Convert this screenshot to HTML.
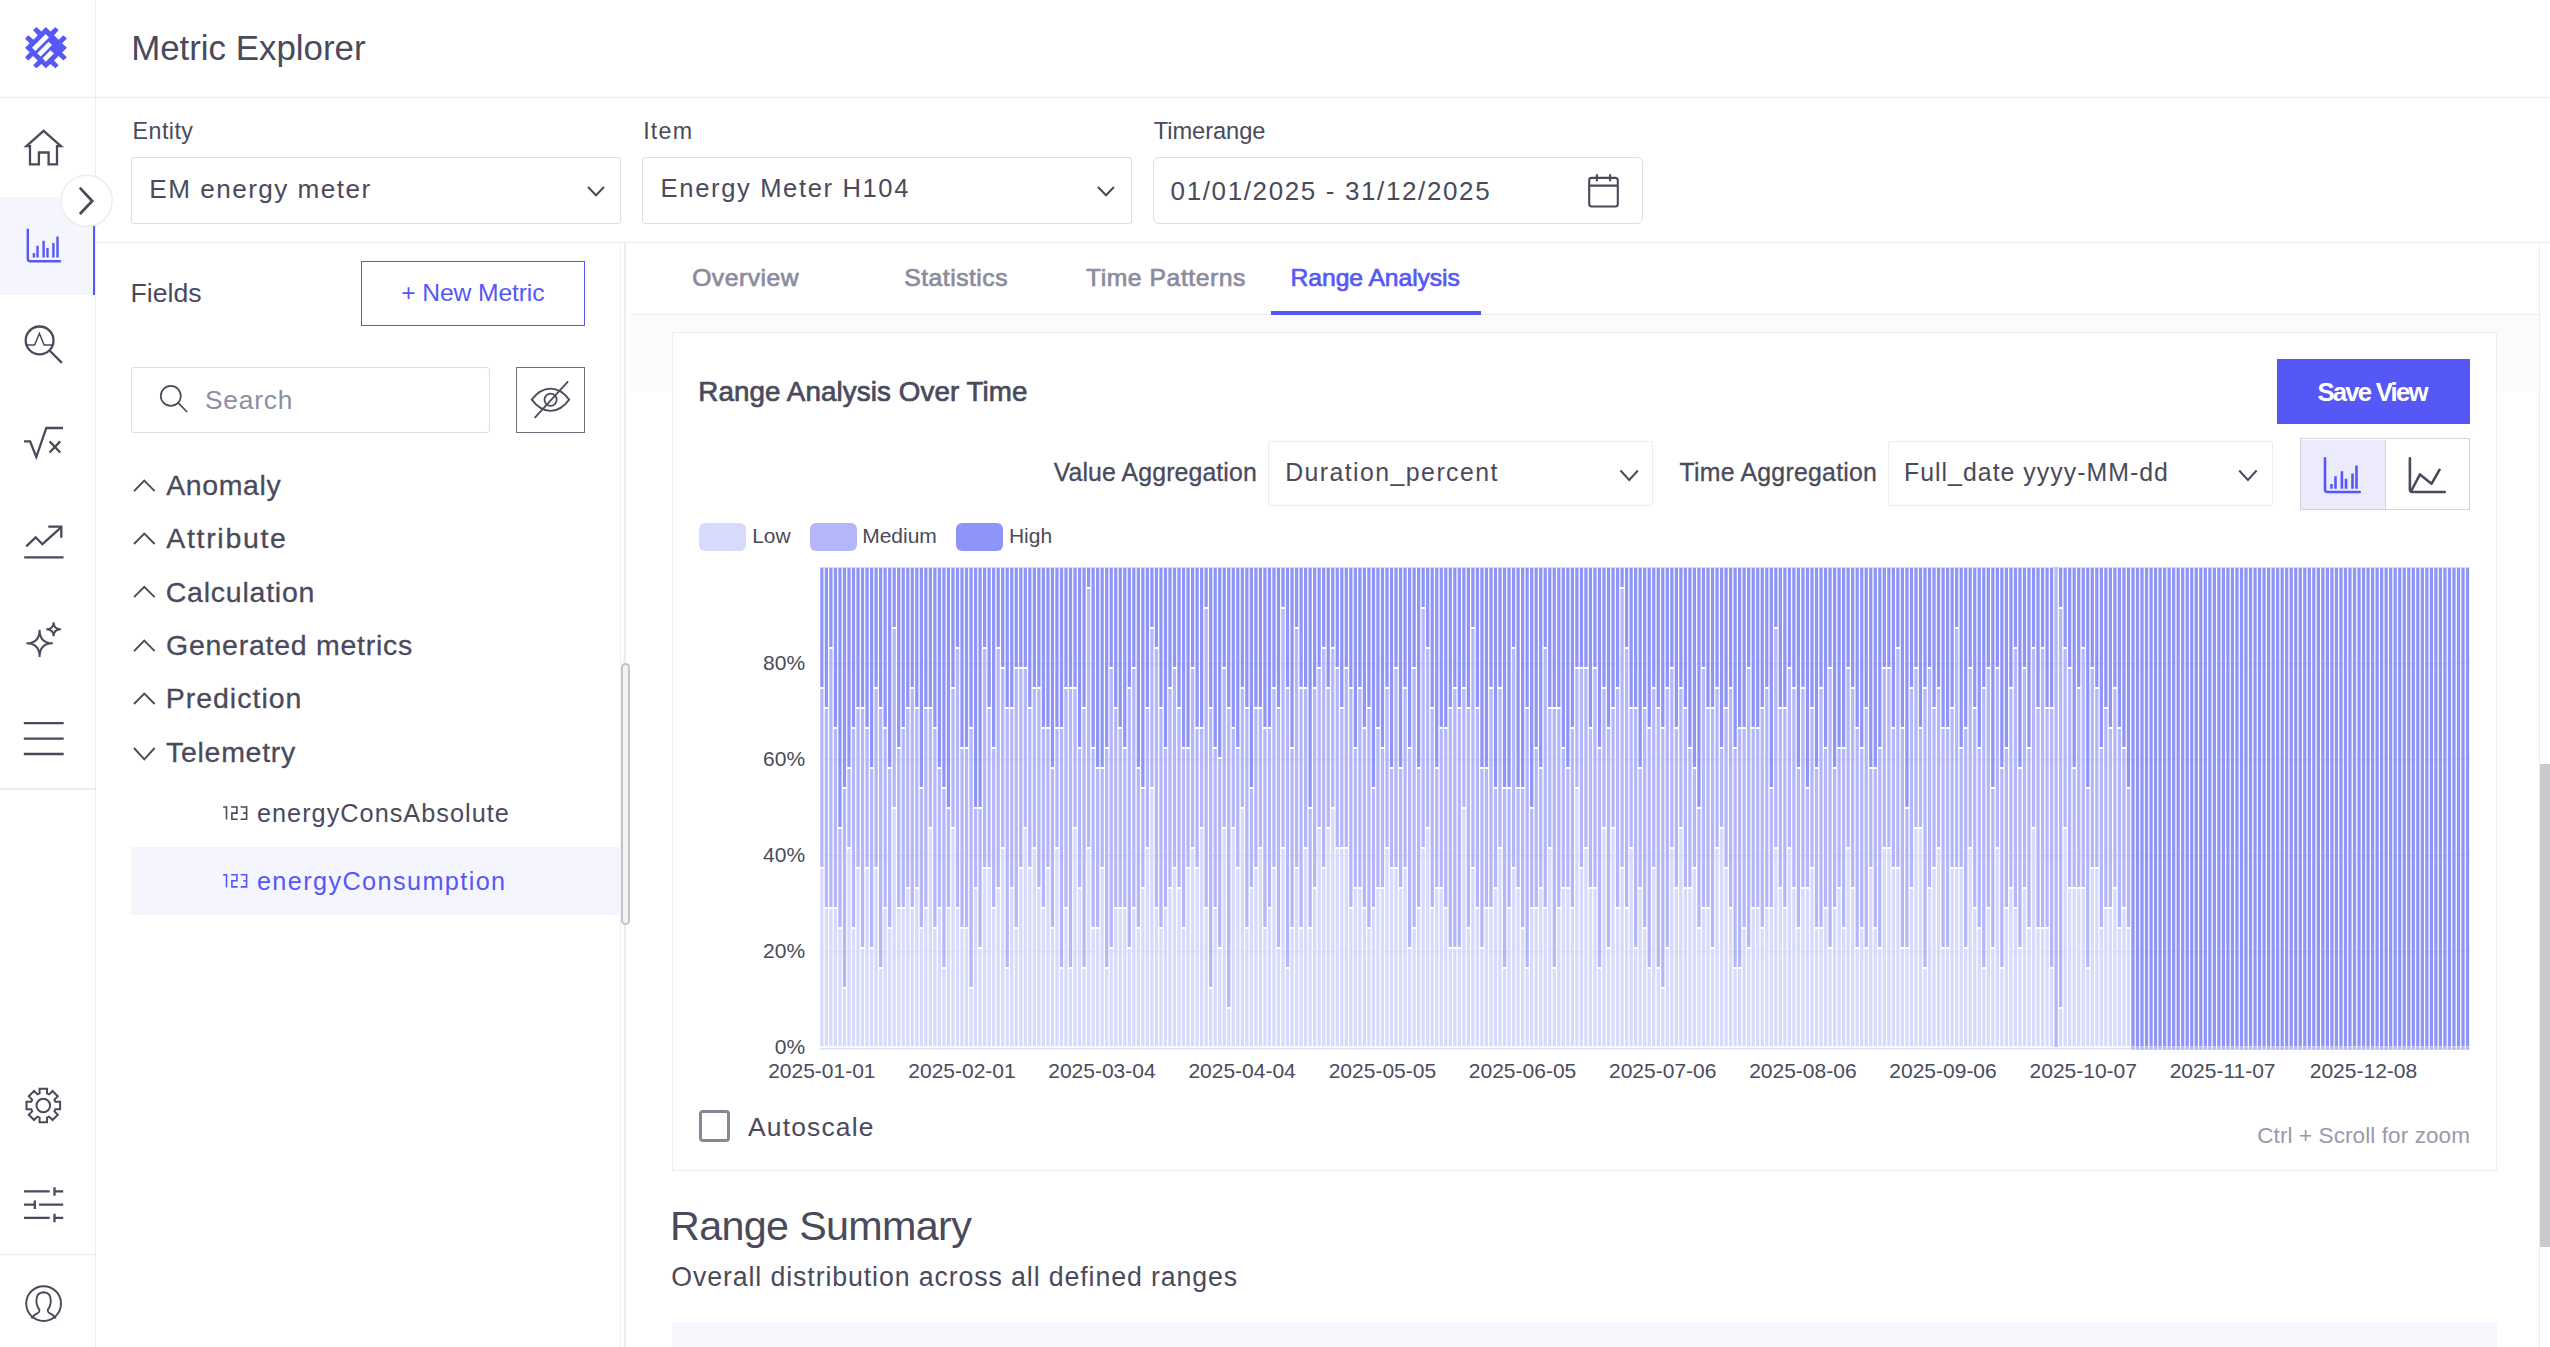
<!DOCTYPE html>
<html><head><meta charset="utf-8"><style>
html,body{margin:0;padding:0;background:#fff;width:2550px;height:1347px;overflow:hidden;position:relative}
.t{position:absolute;white-space:pre;font-family:"Liberation Sans",sans-serif}
.b{position:absolute}
</style></head><body>
<div class="b" style="left:0px;top:96.5px;width:2550px;height:1.5px;background:#ececf0"></div>
<div class="b" style="left:94.5px;top:0px;width:1.5px;height:1347px;background:#ececf0"></div>
<div class="b" style="left:0px;top:788px;width:95px;height:1.5px;background:#ececf0"></div>
<div class="b" style="left:0px;top:1253.5px;width:95px;height:1.5px;background:#ececf0"></div>
<div class="b" style="left:0px;top:196.5px;width:94.5px;height:98.5px;background:#f5f5fd"></div>
<div class="b" style="left:93px;top:196.5px;width:2px;height:98.5px;background:#5558f6"></div>
<div class="b" style="left:96px;top:241.5px;width:2454px;height:1.5px;background:#ececf0"></div>
<div class="b" style="left:619.8px;top:243px;width:1.0px;height:1104px;background:#f0f0f3"></div>
<div class="b" style="left:624px;top:243px;width:2px;height:1104px;background:#ededf0"></div>
<div class="b" style="left:630px;top:313.5px;width:1909px;height:1.5px;background:#ededf1"></div>
<div class="b" style="left:630px;top:315px;width:1909px;height:77px;background:#fbfbfd"></div>
<div class="b" style="left:2538.5px;top:243px;width:1.5px;height:1104px;background:#ededf0"></div>
<div class="b" style="left:2540px;top:764px;width:10px;height:483px;background:#c9c9ce"></div>
<div class="b" style="left:621px;top:663px;width:9px;height:261.5px;border:2.6px solid #c4c4cc;background:#f3f3f6;border-radius:4.5px;box-sizing:border-box"></div>
<div class="b" style="left:131px;top:156.5px;width:490px;height:67.0px;border:1.5px solid #dedee3;border-radius:3px;box-sizing:border-box;background:#fff"></div>
<div class="b" style="left:642px;top:156.5px;width:490px;height:67.0px;border:1.5px solid #dedee3;border-radius:3px;box-sizing:border-box;background:#fff"></div>
<div class="b" style="left:1153px;top:156.5px;width:490px;height:67.0px;border:1.5px solid #dedee3;border-radius:6px;box-sizing:border-box;background:#fff"></div>
<div class="b" style="left:361px;top:261px;width:224px;height:65px;border:1.5px solid #5558f6;box-sizing:border-box"></div>
<div class="b" style="left:131px;top:366.5px;width:359px;height:66.0px;border:1.5px solid #dedee3;border-radius:3px;box-sizing:border-box;background:#fff"></div>
<div class="b" style="left:516px;top:366.5px;width:69px;height:66.0px;border:1.5px solid #6e6e7e;box-sizing:border-box"></div>
<div class="b" style="left:131px;top:847px;width:489px;height:68px;background:#f5f5fe"></div>
<div class="b" style="left:672px;top:332px;width:1825px;height:839px;border:1.5px solid #eeeef1;box-sizing:border-box;background:#fff"></div>
<div class="b" style="left:2277px;top:359px;width:193px;height:65px;background:#5558f5"></div>
<div class="b" style="left:1268px;top:441px;width:385px;height:65px;border:1.5px solid #ececf0;border-radius:2px;box-sizing:border-box;background:#fff"></div>
<div class="b" style="left:1888px;top:441px;width:385px;height:65px;border:1.5px solid #ececf0;border-radius:2px;box-sizing:border-box;background:#fff"></div>
<div class="b" style="left:2299.5px;top:438px;width:170.5px;height:72px;border:1.5px solid #d4d4dc;box-sizing:border-box;background:#fff"></div>
<div class="b" style="left:2301px;top:439.5px;width:83.5px;height:69.0px;background:#ebebfb"></div>
<div class="b" style="left:2384.5px;top:439.5px;width:1.5px;height:69.0px;background:#d4d4dc"></div>
<div class="b" style="left:699px;top:1110px;width:31px;height:32px;border:3px solid #878797;border-radius:4px;box-sizing:border-box"></div>
<div class="b" style="left:672px;top:1322px;width:1825px;height:25px;background:#f6f6fc"></div>
<div class="b" style="left:1271px;top:311px;width:210px;height:3.5px;background:#5558f6"></div>
<div class="b" style="left:699px;top:523px;width:47px;height:27.5px;background:#d6dbfd;border-radius:6px"></div>
<div class="b" style="left:809.5px;top:523px;width:47.0px;height:27.5px;background:#b3b7f9;border-radius:6px"></div>
<div class="b" style="left:955.5px;top:523px;width:47.0px;height:27.5px;background:#8f94f8;border-radius:6px"></div>
<div class="t" style="left:131.14px;top:31.47px;font-size:34.88px;line-height:34.88px;letter-spacing:-0.007px;color:#4a4a5b;font-weight:400;">Metric Explorer</div>
<div class="t" style="left:132.59px;top:120.31px;font-size:23.26px;line-height:23.26px;letter-spacing:0.438px;color:#4a4a5b;font-weight:400;">Entity</div>
<div class="t" style="left:643.15px;top:120.31px;font-size:23.26px;line-height:23.26px;letter-spacing:1.250px;color:#4a4a5b;font-weight:400;">Item</div>
<div class="t" style="left:1153.77px;top:119.54px;font-size:23.69px;line-height:23.69px;letter-spacing:-0.082px;color:#4a4a5b;font-weight:400;">Timerange</div>
<div class="t" style="left:149.35px;top:175.85px;font-size:26.16px;line-height:26.16px;letter-spacing:1.445px;color:#4a4a5b;font-weight:400;">EM energy meter</div>
<div class="t" style="left:660.60px;top:175.95px;font-size:25.58px;line-height:25.58px;letter-spacing:1.627px;color:#4a4a5b;font-weight:400;">Energy Meter H104</div>
<div class="t" style="left:1170.58px;top:177.68px;font-size:26.02px;line-height:26.02px;letter-spacing:1.616px;color:#4a4a5b;font-weight:400;">01/01/2025 - 31/12/2025</div>
<div class="t" style="left:692.13px;top:266.08px;font-size:24.71px;line-height:24.71px;letter-spacing:0.505px;color:#8b8b9d;font-weight:400;-webkit-text-stroke:0.7px #8b8b9d;">Overview</div>
<div class="t" style="left:904.18px;top:266.08px;font-size:24.71px;line-height:24.71px;letter-spacing:0.506px;color:#8b8b9d;font-weight:400;-webkit-text-stroke:0.7px #8b8b9d;">Statistics</div>
<div class="t" style="left:1085.95px;top:266.08px;font-size:24.71px;line-height:24.71px;letter-spacing:0.555px;color:#8b8b9d;font-weight:400;-webkit-text-stroke:0.7px #8b8b9d;">Time Patterns</div>
<div class="t" style="left:1290.57px;top:266.08px;font-size:24.71px;line-height:24.71px;letter-spacing:-0.074px;color:#5558f6;font-weight:400;-webkit-text-stroke:0.7px #5558f6;">Range Analysis</div>
<div class="t" style="left:130.62px;top:280.48px;font-size:26.60px;line-height:26.60px;letter-spacing:-0.002px;color:#4a4a5b;font-weight:400;">Fields</div>
<div class="t" style="left:401.19px;top:281.08px;font-size:24.71px;line-height:24.71px;letter-spacing:-0.136px;color:#5558f6;font-weight:400;">+ New Metric</div>
<div class="t" style="left:205.01px;top:387.13px;font-size:26.31px;line-height:26.31px;letter-spacing:0.809px;color:#8e8ea2;font-weight:400;">Search</div>
<div class="t" style="left:166.24px;top:471.48px;font-size:28.49px;line-height:28.49px;letter-spacing:0.596px;color:#4a4a5b;font-weight:400;-webkit-text-stroke:0.3px #4a4a5b;">Anomaly</div>
<div class="t" style="left:166.24px;top:524.38px;font-size:28.49px;line-height:28.49px;letter-spacing:1.703px;color:#4a4a5b;font-weight:400;-webkit-text-stroke:0.3px #4a4a5b;">Attribute</div>
<div class="t" style="left:165.75px;top:577.58px;font-size:28.49px;line-height:28.49px;letter-spacing:0.776px;color:#4a4a5b;font-weight:400;-webkit-text-stroke:0.3px #4a4a5b;">Calculation</div>
<div class="t" style="left:166.07px;top:631.48px;font-size:28.49px;line-height:28.49px;letter-spacing:0.739px;color:#4a4a5b;font-weight:400;-webkit-text-stroke:0.3px #4a4a5b;">Generated metrics</div>
<div class="t" style="left:165.66px;top:684.38px;font-size:28.49px;line-height:28.49px;letter-spacing:1.012px;color:#4a4a5b;font-weight:400;-webkit-text-stroke:0.3px #4a4a5b;">Prediction</div>
<div class="t" style="left:165.96px;top:737.58px;font-size:28.49px;line-height:28.49px;letter-spacing:0.732px;color:#4a4a5b;font-weight:400;-webkit-text-stroke:0.3px #4a4a5b;">Telemetry</div>
<div class="t" style="left:256.93px;top:801.19px;font-size:25.29px;line-height:25.29px;letter-spacing:1.012px;color:#4a4a5b;font-weight:400;">energyConsAbsolute</div>
<div class="t" style="left:256.93px;top:868.89px;font-size:25.29px;line-height:25.29px;letter-spacing:1.373px;color:#5558f6;font-weight:400;">energyConsumption</div>
<div class="t" style="left:698.32px;top:377.50px;font-size:27.76px;line-height:27.76px;letter-spacing:0.097px;color:#4a4a5b;font-weight:400;-webkit-text-stroke:0.7px #4a4a5b;">Range Analysis Over Time</div>
<div class="t" style="left:2317.46px;top:380.12px;font-size:25.73px;line-height:25.73px;letter-spacing:-1.796px;color:#ffffff;font-weight:700;">Save View</div>
<div class="t" style="left:1053.69px;top:461.16px;font-size:24.85px;line-height:24.85px;letter-spacing:0.113px;color:#4a4a5b;font-weight:400;-webkit-text-stroke:0.3px #4a4a5b;">Value Aggregation</div>
<div class="t" style="left:1285.16px;top:460.96px;font-size:24.85px;line-height:24.85px;letter-spacing:1.443px;color:#4a4a5b;font-weight:400;">Duration_percent</div>
<div class="t" style="left:1679.44px;top:461.36px;font-size:24.85px;line-height:24.85px;letter-spacing:0.246px;color:#4a4a5b;font-weight:400;-webkit-text-stroke:0.3px #4a4a5b;">Time Aggregation</div>
<div class="t" style="left:1903.96px;top:460.96px;font-size:24.85px;line-height:24.85px;letter-spacing:1.030px;color:#4a4a5b;font-weight:400;">Full_date yyyy-MM-dd</div>
<div class="t" style="left:752.18px;top:525.22px;font-size:21.00px;line-height:21.00px;letter-spacing:0.000px;color:#4a4a5b;font-weight:400;">Low</div>
<div class="t" style="left:862.18px;top:525.22px;font-size:21.00px;line-height:21.00px;letter-spacing:0.000px;color:#4a4a5b;font-weight:400;">Medium</div>
<div class="t" style="left:1008.88px;top:525.22px;font-size:21.00px;line-height:21.00px;letter-spacing:0.000px;color:#4a4a5b;font-weight:400;">High</div>
<div class="t" style="left:763.12px;top:652.32px;font-size:21.00px;line-height:21.00px;letter-spacing:0.000px;color:#4a4a5b;font-weight:400;">80%</div>
<div class="t" style="left:763.12px;top:748.42px;font-size:21.00px;line-height:21.00px;letter-spacing:0.000px;color:#4a4a5b;font-weight:400;">60%</div>
<div class="t" style="left:763.12px;top:844.42px;font-size:21.00px;line-height:21.00px;letter-spacing:0.000px;color:#4a4a5b;font-weight:400;">40%</div>
<div class="t" style="left:763.12px;top:940.42px;font-size:21.00px;line-height:21.00px;letter-spacing:0.000px;color:#4a4a5b;font-weight:400;">20%</div>
<div class="t" style="left:774.80px;top:1036.42px;font-size:21.00px;line-height:21.00px;letter-spacing:0.000px;color:#4a4a5b;font-weight:400;">0%</div>
<div class="t" style="left:768.14px;top:1059.92px;font-size:21.00px;line-height:21.00px;letter-spacing:0.000px;color:#4a4a5b;font-weight:400;">2025-01-01</div>
<div class="t" style="left:908.29px;top:1059.92px;font-size:21.00px;line-height:21.00px;letter-spacing:0.000px;color:#4a4a5b;font-weight:400;">2025-02-01</div>
<div class="t" style="left:1048.24px;top:1059.92px;font-size:21.00px;line-height:21.00px;letter-spacing:0.000px;color:#4a4a5b;font-weight:400;">2025-03-04</div>
<div class="t" style="left:1188.39px;top:1059.92px;font-size:21.00px;line-height:21.00px;letter-spacing:0.000px;color:#4a4a5b;font-weight:400;">2025-04-04</div>
<div class="t" style="left:1328.68px;top:1059.92px;font-size:21.00px;line-height:21.00px;letter-spacing:0.000px;color:#4a4a5b;font-weight:400;">2025-05-05</div>
<div class="t" style="left:1468.83px;top:1059.92px;font-size:21.00px;line-height:21.00px;letter-spacing:0.000px;color:#4a4a5b;font-weight:400;">2025-06-05</div>
<div class="t" style="left:1609.01px;top:1059.92px;font-size:21.00px;line-height:21.00px;letter-spacing:0.000px;color:#4a4a5b;font-weight:400;">2025-07-06</div>
<div class="t" style="left:1749.16px;top:1059.92px;font-size:21.00px;line-height:21.00px;letter-spacing:0.000px;color:#4a4a5b;font-weight:400;">2025-08-06</div>
<div class="t" style="left:1889.32px;top:1059.92px;font-size:21.00px;line-height:21.00px;letter-spacing:0.000px;color:#4a4a5b;font-weight:400;">2025-09-06</div>
<div class="t" style="left:2029.54px;top:1059.92px;font-size:21.00px;line-height:21.00px;letter-spacing:0.000px;color:#4a4a5b;font-weight:400;">2025-10-07</div>
<div class="t" style="left:2169.69px;top:1059.92px;font-size:21.00px;line-height:21.00px;letter-spacing:0.000px;color:#4a4a5b;font-weight:400;">2025-11-07</div>
<div class="t" style="left:2309.77px;top:1059.92px;font-size:21.00px;line-height:21.00px;letter-spacing:0.000px;color:#4a4a5b;font-weight:400;">2025-12-08</div>
<div class="t" style="left:747.95px;top:1113.71px;font-size:26.45px;line-height:26.45px;letter-spacing:1.182px;color:#4a4a5b;font-weight:400;">Autoscale</div>
<div class="t" style="left:2257.26px;top:1125.33px;font-size:22.53px;line-height:22.53px;letter-spacing:0.090px;color:#9999ad;font-weight:400;">Ctrl + Scroll for zoom</div>
<div class="t" style="left:670.11px;top:1205.66px;font-size:41.28px;line-height:41.28px;letter-spacing:-0.662px;color:#4a4a5b;font-weight:400;">Range Summary</div>
<div class="t" style="left:671.33px;top:1263.86px;font-size:26.74px;line-height:26.74px;letter-spacing:0.884px;color:#4a4a5b;font-weight:400;">Overall distribution across all defined ranges</div>

<svg class="b" style="left:0;top:0" width="2550" height="1347" viewBox="0 0 2550 1347">
<rect x="819.6" y="951.15" width="1650.20" height="1.5" fill="#e4e6ee"/>
<rect x="819.6" y="855.15" width="1650.20" height="1.5" fill="#e4e6ee"/>
<rect x="819.6" y="759.15" width="1650.20" height="1.5" fill="#e4e6ee"/>
<rect x="819.6" y="663.15" width="1650.20" height="1.5" fill="#e4e6ee"/>
<rect x="819.6" y="567.15" width="1650.20" height="1.5" fill="#e4e6ee"/>
<rect x="819.6" y="1047.9" width="1650.20" height="1.6" fill="#dfe3ee"/>
<rect x="820.23" y="567.80" width="3.26" height="119.20" fill="#8f94f8"/>
<rect x="820.23" y="689.00" width="3.26" height="178.00" fill="#b3b7f9"/>
<rect x="820.23" y="869.00" width="3.26" height="177.20" fill="#d6dbfd"/>
<rect x="824.75" y="567.80" width="3.26" height="139.20" fill="#8f94f8"/>
<rect x="824.75" y="709.00" width="3.26" height="198.00" fill="#b3b7f9"/>
<rect x="824.75" y="909.00" width="3.26" height="137.20" fill="#d6dbfd"/>
<rect x="829.28" y="567.80" width="3.26" height="79.20" fill="#8f94f8"/>
<rect x="829.28" y="649.00" width="3.26" height="258.00" fill="#b3b7f9"/>
<rect x="829.28" y="909.00" width="3.26" height="137.20" fill="#d6dbfd"/>
<rect x="833.80" y="567.80" width="3.26" height="159.20" fill="#8f94f8"/>
<rect x="833.80" y="729.00" width="3.26" height="178.00" fill="#b3b7f9"/>
<rect x="833.80" y="909.00" width="3.26" height="137.20" fill="#d6dbfd"/>
<rect x="838.32" y="567.80" width="3.26" height="259.20" fill="#8f94f8"/>
<rect x="838.32" y="829.00" width="3.26" height="98.00" fill="#b3b7f9"/>
<rect x="838.32" y="929.00" width="3.26" height="117.20" fill="#d6dbfd"/>
<rect x="842.84" y="567.80" width="3.26" height="219.20" fill="#8f94f8"/>
<rect x="842.84" y="789.00" width="3.26" height="198.00" fill="#b3b7f9"/>
<rect x="842.84" y="989.00" width="3.26" height="57.20" fill="#d6dbfd"/>
<rect x="847.36" y="567.80" width="3.26" height="199.20" fill="#8f94f8"/>
<rect x="847.36" y="769.00" width="3.26" height="78.00" fill="#b3b7f9"/>
<rect x="847.36" y="849.00" width="3.26" height="197.20" fill="#d6dbfd"/>
<rect x="851.88" y="567.80" width="3.26" height="159.20" fill="#8f94f8"/>
<rect x="851.88" y="729.00" width="3.26" height="198.00" fill="#b3b7f9"/>
<rect x="851.88" y="929.00" width="3.26" height="117.20" fill="#d6dbfd"/>
<rect x="856.40" y="567.80" width="3.26" height="139.20" fill="#8f94f8"/>
<rect x="856.40" y="709.00" width="3.26" height="158.00" fill="#b3b7f9"/>
<rect x="856.40" y="869.00" width="3.26" height="177.20" fill="#d6dbfd"/>
<rect x="860.92" y="567.80" width="3.26" height="139.20" fill="#8f94f8"/>
<rect x="860.92" y="709.00" width="3.26" height="238.00" fill="#b3b7f9"/>
<rect x="860.92" y="949.00" width="3.26" height="97.20" fill="#d6dbfd"/>
<rect x="865.44" y="567.80" width="3.26" height="159.20" fill="#8f94f8"/>
<rect x="865.44" y="729.00" width="3.26" height="138.00" fill="#b3b7f9"/>
<rect x="865.44" y="869.00" width="3.26" height="177.20" fill="#d6dbfd"/>
<rect x="869.97" y="567.80" width="3.26" height="199.20" fill="#8f94f8"/>
<rect x="869.97" y="769.00" width="3.26" height="178.00" fill="#b3b7f9"/>
<rect x="869.97" y="949.00" width="3.26" height="97.20" fill="#d6dbfd"/>
<rect x="874.49" y="567.80" width="3.26" height="119.20" fill="#8f94f8"/>
<rect x="874.49" y="689.00" width="3.26" height="178.00" fill="#b3b7f9"/>
<rect x="874.49" y="869.00" width="3.26" height="177.20" fill="#d6dbfd"/>
<rect x="879.01" y="567.80" width="3.26" height="139.20" fill="#8f94f8"/>
<rect x="879.01" y="709.00" width="3.26" height="258.00" fill="#b3b7f9"/>
<rect x="879.01" y="969.00" width="3.26" height="77.20" fill="#d6dbfd"/>
<rect x="883.53" y="567.80" width="3.26" height="159.20" fill="#8f94f8"/>
<rect x="883.53" y="729.00" width="3.26" height="178.00" fill="#b3b7f9"/>
<rect x="883.53" y="909.00" width="3.26" height="137.20" fill="#d6dbfd"/>
<rect x="888.05" y="567.80" width="3.26" height="199.20" fill="#8f94f8"/>
<rect x="888.05" y="769.00" width="3.26" height="158.00" fill="#b3b7f9"/>
<rect x="888.05" y="929.00" width="3.26" height="117.20" fill="#d6dbfd"/>
<rect x="892.57" y="567.80" width="3.26" height="59.20" fill="#8f94f8"/>
<rect x="892.57" y="629.00" width="3.26" height="178.00" fill="#b3b7f9"/>
<rect x="892.57" y="809.00" width="3.26" height="237.20" fill="#d6dbfd"/>
<rect x="897.09" y="567.80" width="3.26" height="179.20" fill="#8f94f8"/>
<rect x="897.09" y="749.00" width="3.26" height="158.00" fill="#b3b7f9"/>
<rect x="897.09" y="909.00" width="3.26" height="137.20" fill="#d6dbfd"/>
<rect x="901.61" y="567.80" width="3.26" height="159.20" fill="#8f94f8"/>
<rect x="901.61" y="729.00" width="3.26" height="178.00" fill="#b3b7f9"/>
<rect x="901.61" y="909.00" width="3.26" height="137.20" fill="#d6dbfd"/>
<rect x="906.13" y="567.80" width="3.26" height="139.20" fill="#8f94f8"/>
<rect x="906.13" y="709.00" width="3.26" height="178.00" fill="#b3b7f9"/>
<rect x="906.13" y="889.00" width="3.26" height="157.20" fill="#d6dbfd"/>
<rect x="910.65" y="567.80" width="3.26" height="119.20" fill="#8f94f8"/>
<rect x="910.65" y="689.00" width="3.26" height="218.00" fill="#b3b7f9"/>
<rect x="910.65" y="909.00" width="3.26" height="137.20" fill="#d6dbfd"/>
<rect x="915.18" y="567.80" width="3.26" height="139.20" fill="#8f94f8"/>
<rect x="915.18" y="709.00" width="3.26" height="178.00" fill="#b3b7f9"/>
<rect x="915.18" y="889.00" width="3.26" height="157.20" fill="#d6dbfd"/>
<rect x="919.70" y="567.80" width="3.26" height="219.20" fill="#8f94f8"/>
<rect x="919.70" y="789.00" width="3.26" height="138.00" fill="#b3b7f9"/>
<rect x="919.70" y="929.00" width="3.26" height="117.20" fill="#d6dbfd"/>
<rect x="924.22" y="567.80" width="3.26" height="139.20" fill="#8f94f8"/>
<rect x="924.22" y="709.00" width="3.26" height="198.00" fill="#b3b7f9"/>
<rect x="924.22" y="909.00" width="3.26" height="137.20" fill="#d6dbfd"/>
<rect x="928.74" y="567.80" width="3.26" height="139.20" fill="#8f94f8"/>
<rect x="928.74" y="709.00" width="3.26" height="118.00" fill="#b3b7f9"/>
<rect x="928.74" y="829.00" width="3.26" height="217.20" fill="#d6dbfd"/>
<rect x="933.26" y="567.80" width="3.26" height="159.20" fill="#8f94f8"/>
<rect x="933.26" y="729.00" width="3.26" height="198.00" fill="#b3b7f9"/>
<rect x="933.26" y="929.00" width="3.26" height="117.20" fill="#d6dbfd"/>
<rect x="937.78" y="567.80" width="3.26" height="199.20" fill="#8f94f8"/>
<rect x="937.78" y="769.00" width="3.26" height="138.00" fill="#b3b7f9"/>
<rect x="937.78" y="909.00" width="3.26" height="137.20" fill="#d6dbfd"/>
<rect x="942.30" y="567.80" width="3.26" height="219.20" fill="#8f94f8"/>
<rect x="942.30" y="789.00" width="3.26" height="178.00" fill="#b3b7f9"/>
<rect x="942.30" y="969.00" width="3.26" height="77.20" fill="#d6dbfd"/>
<rect x="946.82" y="567.80" width="3.26" height="239.20" fill="#8f94f8"/>
<rect x="946.82" y="809.00" width="3.26" height="98.00" fill="#b3b7f9"/>
<rect x="946.82" y="909.00" width="3.26" height="137.20" fill="#d6dbfd"/>
<rect x="951.34" y="567.80" width="3.26" height="119.20" fill="#8f94f8"/>
<rect x="951.34" y="689.00" width="3.26" height="138.00" fill="#b3b7f9"/>
<rect x="951.34" y="829.00" width="3.26" height="217.20" fill="#d6dbfd"/>
<rect x="955.87" y="567.80" width="3.26" height="79.20" fill="#8f94f8"/>
<rect x="955.87" y="649.00" width="3.26" height="258.00" fill="#b3b7f9"/>
<rect x="955.87" y="909.00" width="3.26" height="137.20" fill="#d6dbfd"/>
<rect x="960.39" y="567.80" width="3.26" height="179.20" fill="#8f94f8"/>
<rect x="960.39" y="749.00" width="3.26" height="178.00" fill="#b3b7f9"/>
<rect x="960.39" y="929.00" width="3.26" height="117.20" fill="#d6dbfd"/>
<rect x="964.91" y="567.80" width="3.26" height="179.20" fill="#8f94f8"/>
<rect x="964.91" y="749.00" width="3.26" height="178.00" fill="#b3b7f9"/>
<rect x="964.91" y="929.00" width="3.26" height="117.20" fill="#d6dbfd"/>
<rect x="969.43" y="567.80" width="3.26" height="159.20" fill="#8f94f8"/>
<rect x="969.43" y="729.00" width="3.26" height="258.00" fill="#b3b7f9"/>
<rect x="969.43" y="989.00" width="3.26" height="57.20" fill="#d6dbfd"/>
<rect x="973.95" y="567.80" width="3.26" height="239.20" fill="#8f94f8"/>
<rect x="973.95" y="809.00" width="3.26" height="78.00" fill="#b3b7f9"/>
<rect x="973.95" y="889.00" width="3.26" height="157.20" fill="#d6dbfd"/>
<rect x="978.47" y="567.80" width="3.26" height="239.20" fill="#8f94f8"/>
<rect x="978.47" y="809.00" width="3.26" height="138.00" fill="#b3b7f9"/>
<rect x="978.47" y="949.00" width="3.26" height="97.20" fill="#d6dbfd"/>
<rect x="982.99" y="567.80" width="3.26" height="79.20" fill="#8f94f8"/>
<rect x="982.99" y="649.00" width="3.26" height="218.00" fill="#b3b7f9"/>
<rect x="982.99" y="869.00" width="3.26" height="177.20" fill="#d6dbfd"/>
<rect x="987.51" y="567.80" width="3.26" height="139.20" fill="#8f94f8"/>
<rect x="987.51" y="709.00" width="3.26" height="158.00" fill="#b3b7f9"/>
<rect x="987.51" y="869.00" width="3.26" height="177.20" fill="#d6dbfd"/>
<rect x="992.03" y="567.80" width="3.26" height="179.20" fill="#8f94f8"/>
<rect x="992.03" y="749.00" width="3.26" height="158.00" fill="#b3b7f9"/>
<rect x="992.03" y="909.00" width="3.26" height="137.20" fill="#d6dbfd"/>
<rect x="996.56" y="567.80" width="3.26" height="79.20" fill="#8f94f8"/>
<rect x="996.56" y="649.00" width="3.26" height="238.00" fill="#b3b7f9"/>
<rect x="996.56" y="889.00" width="3.26" height="157.20" fill="#d6dbfd"/>
<rect x="1001.08" y="567.80" width="3.26" height="99.20" fill="#8f94f8"/>
<rect x="1001.08" y="669.00" width="3.26" height="178.00" fill="#b3b7f9"/>
<rect x="1001.08" y="849.00" width="3.26" height="197.20" fill="#d6dbfd"/>
<rect x="1005.60" y="567.80" width="3.26" height="139.20" fill="#8f94f8"/>
<rect x="1005.60" y="709.00" width="3.26" height="258.00" fill="#b3b7f9"/>
<rect x="1005.60" y="969.00" width="3.26" height="77.20" fill="#d6dbfd"/>
<rect x="1010.12" y="567.80" width="3.26" height="139.20" fill="#8f94f8"/>
<rect x="1010.12" y="709.00" width="3.26" height="178.00" fill="#b3b7f9"/>
<rect x="1010.12" y="889.00" width="3.26" height="157.20" fill="#d6dbfd"/>
<rect x="1014.64" y="567.80" width="3.26" height="99.20" fill="#8f94f8"/>
<rect x="1014.64" y="669.00" width="3.26" height="258.00" fill="#b3b7f9"/>
<rect x="1014.64" y="929.00" width="3.26" height="117.20" fill="#d6dbfd"/>
<rect x="1019.16" y="567.80" width="3.26" height="99.20" fill="#8f94f8"/>
<rect x="1019.16" y="669.00" width="3.26" height="198.00" fill="#b3b7f9"/>
<rect x="1019.16" y="869.00" width="3.26" height="177.20" fill="#d6dbfd"/>
<rect x="1023.68" y="567.80" width="3.26" height="99.20" fill="#8f94f8"/>
<rect x="1023.68" y="669.00" width="3.26" height="158.00" fill="#b3b7f9"/>
<rect x="1023.68" y="829.00" width="3.26" height="217.20" fill="#d6dbfd"/>
<rect x="1028.20" y="567.80" width="3.26" height="139.20" fill="#8f94f8"/>
<rect x="1028.20" y="709.00" width="3.26" height="158.00" fill="#b3b7f9"/>
<rect x="1028.20" y="869.00" width="3.26" height="177.20" fill="#d6dbfd"/>
<rect x="1032.72" y="567.80" width="3.26" height="119.20" fill="#8f94f8"/>
<rect x="1032.72" y="689.00" width="3.26" height="158.00" fill="#b3b7f9"/>
<rect x="1032.72" y="849.00" width="3.26" height="197.20" fill="#d6dbfd"/>
<rect x="1037.25" y="567.80" width="3.26" height="119.20" fill="#8f94f8"/>
<rect x="1037.25" y="689.00" width="3.26" height="198.00" fill="#b3b7f9"/>
<rect x="1037.25" y="889.00" width="3.26" height="157.20" fill="#d6dbfd"/>
<rect x="1041.77" y="567.80" width="3.26" height="159.20" fill="#8f94f8"/>
<rect x="1041.77" y="729.00" width="3.26" height="178.00" fill="#b3b7f9"/>
<rect x="1041.77" y="909.00" width="3.26" height="137.20" fill="#d6dbfd"/>
<rect x="1046.29" y="567.80" width="3.26" height="159.20" fill="#8f94f8"/>
<rect x="1046.29" y="729.00" width="3.26" height="138.00" fill="#b3b7f9"/>
<rect x="1046.29" y="869.00" width="3.26" height="177.20" fill="#d6dbfd"/>
<rect x="1050.81" y="567.80" width="3.26" height="199.20" fill="#8f94f8"/>
<rect x="1050.81" y="769.00" width="3.26" height="158.00" fill="#b3b7f9"/>
<rect x="1050.81" y="929.00" width="3.26" height="117.20" fill="#d6dbfd"/>
<rect x="1055.33" y="567.80" width="3.26" height="159.20" fill="#8f94f8"/>
<rect x="1055.33" y="729.00" width="3.26" height="118.00" fill="#b3b7f9"/>
<rect x="1055.33" y="849.00" width="3.26" height="197.20" fill="#d6dbfd"/>
<rect x="1059.85" y="567.80" width="3.26" height="159.20" fill="#8f94f8"/>
<rect x="1059.85" y="729.00" width="3.26" height="238.00" fill="#b3b7f9"/>
<rect x="1059.85" y="969.00" width="3.26" height="77.20" fill="#d6dbfd"/>
<rect x="1064.37" y="567.80" width="3.26" height="119.20" fill="#8f94f8"/>
<rect x="1064.37" y="689.00" width="3.26" height="218.00" fill="#b3b7f9"/>
<rect x="1064.37" y="909.00" width="3.26" height="137.20" fill="#d6dbfd"/>
<rect x="1068.89" y="567.80" width="3.26" height="119.20" fill="#8f94f8"/>
<rect x="1068.89" y="689.00" width="3.26" height="278.00" fill="#b3b7f9"/>
<rect x="1068.89" y="969.00" width="3.26" height="77.20" fill="#d6dbfd"/>
<rect x="1073.41" y="567.80" width="3.26" height="119.20" fill="#8f94f8"/>
<rect x="1073.41" y="689.00" width="3.26" height="138.00" fill="#b3b7f9"/>
<rect x="1073.41" y="829.00" width="3.26" height="217.20" fill="#d6dbfd"/>
<rect x="1077.94" y="567.80" width="3.26" height="179.20" fill="#8f94f8"/>
<rect x="1077.94" y="749.00" width="3.26" height="138.00" fill="#b3b7f9"/>
<rect x="1077.94" y="889.00" width="3.26" height="157.20" fill="#d6dbfd"/>
<rect x="1082.46" y="567.80" width="3.26" height="139.20" fill="#8f94f8"/>
<rect x="1082.46" y="709.00" width="3.26" height="258.00" fill="#b3b7f9"/>
<rect x="1082.46" y="969.00" width="3.26" height="77.20" fill="#d6dbfd"/>
<rect x="1086.98" y="567.80" width="3.26" height="19.20" fill="#8f94f8"/>
<rect x="1086.98" y="589.00" width="3.26" height="258.00" fill="#b3b7f9"/>
<rect x="1086.98" y="849.00" width="3.26" height="197.20" fill="#d6dbfd"/>
<rect x="1091.50" y="567.80" width="3.26" height="179.20" fill="#8f94f8"/>
<rect x="1091.50" y="749.00" width="3.26" height="178.00" fill="#b3b7f9"/>
<rect x="1091.50" y="929.00" width="3.26" height="117.20" fill="#d6dbfd"/>
<rect x="1096.02" y="567.80" width="3.26" height="199.20" fill="#8f94f8"/>
<rect x="1096.02" y="769.00" width="3.26" height="158.00" fill="#b3b7f9"/>
<rect x="1096.02" y="929.00" width="3.26" height="117.20" fill="#d6dbfd"/>
<rect x="1100.54" y="567.80" width="3.26" height="199.20" fill="#8f94f8"/>
<rect x="1100.54" y="769.00" width="3.26" height="98.00" fill="#b3b7f9"/>
<rect x="1100.54" y="869.00" width="3.26" height="177.20" fill="#d6dbfd"/>
<rect x="1105.06" y="567.80" width="3.26" height="179.20" fill="#8f94f8"/>
<rect x="1105.06" y="749.00" width="3.26" height="218.00" fill="#b3b7f9"/>
<rect x="1105.06" y="969.00" width="3.26" height="77.20" fill="#d6dbfd"/>
<rect x="1109.58" y="567.80" width="3.26" height="99.20" fill="#8f94f8"/>
<rect x="1109.58" y="669.00" width="3.26" height="278.00" fill="#b3b7f9"/>
<rect x="1109.58" y="949.00" width="3.26" height="97.20" fill="#d6dbfd"/>
<rect x="1114.10" y="567.80" width="3.26" height="139.20" fill="#8f94f8"/>
<rect x="1114.10" y="709.00" width="3.26" height="198.00" fill="#b3b7f9"/>
<rect x="1114.10" y="909.00" width="3.26" height="137.20" fill="#d6dbfd"/>
<rect x="1118.63" y="567.80" width="3.26" height="159.20" fill="#8f94f8"/>
<rect x="1118.63" y="729.00" width="3.26" height="178.00" fill="#b3b7f9"/>
<rect x="1118.63" y="909.00" width="3.26" height="137.20" fill="#d6dbfd"/>
<rect x="1123.15" y="567.80" width="3.26" height="179.20" fill="#8f94f8"/>
<rect x="1123.15" y="749.00" width="3.26" height="158.00" fill="#b3b7f9"/>
<rect x="1123.15" y="909.00" width="3.26" height="137.20" fill="#d6dbfd"/>
<rect x="1127.67" y="567.80" width="3.26" height="119.20" fill="#8f94f8"/>
<rect x="1127.67" y="689.00" width="3.26" height="258.00" fill="#b3b7f9"/>
<rect x="1127.67" y="949.00" width="3.26" height="97.20" fill="#d6dbfd"/>
<rect x="1132.19" y="567.80" width="3.26" height="99.20" fill="#8f94f8"/>
<rect x="1132.19" y="669.00" width="3.26" height="238.00" fill="#b3b7f9"/>
<rect x="1132.19" y="909.00" width="3.26" height="137.20" fill="#d6dbfd"/>
<rect x="1136.71" y="567.80" width="3.26" height="199.20" fill="#8f94f8"/>
<rect x="1136.71" y="769.00" width="3.26" height="158.00" fill="#b3b7f9"/>
<rect x="1136.71" y="929.00" width="3.26" height="117.20" fill="#d6dbfd"/>
<rect x="1141.23" y="567.80" width="3.26" height="219.20" fill="#8f94f8"/>
<rect x="1141.23" y="789.00" width="3.26" height="98.00" fill="#b3b7f9"/>
<rect x="1141.23" y="889.00" width="3.26" height="157.20" fill="#d6dbfd"/>
<rect x="1145.75" y="567.80" width="3.26" height="139.20" fill="#8f94f8"/>
<rect x="1145.75" y="709.00" width="3.26" height="138.00" fill="#b3b7f9"/>
<rect x="1145.75" y="849.00" width="3.26" height="197.20" fill="#d6dbfd"/>
<rect x="1150.27" y="567.80" width="3.26" height="59.20" fill="#8f94f8"/>
<rect x="1150.27" y="629.00" width="3.26" height="158.00" fill="#b3b7f9"/>
<rect x="1150.27" y="789.00" width="3.26" height="257.20" fill="#d6dbfd"/>
<rect x="1154.79" y="567.80" width="3.26" height="79.20" fill="#8f94f8"/>
<rect x="1154.79" y="649.00" width="3.26" height="258.00" fill="#b3b7f9"/>
<rect x="1154.79" y="909.00" width="3.26" height="137.20" fill="#d6dbfd"/>
<rect x="1159.32" y="567.80" width="3.26" height="139.20" fill="#8f94f8"/>
<rect x="1159.32" y="709.00" width="3.26" height="218.00" fill="#b3b7f9"/>
<rect x="1159.32" y="929.00" width="3.26" height="117.20" fill="#d6dbfd"/>
<rect x="1163.84" y="567.80" width="3.26" height="179.20" fill="#8f94f8"/>
<rect x="1163.84" y="749.00" width="3.26" height="158.00" fill="#b3b7f9"/>
<rect x="1163.84" y="909.00" width="3.26" height="137.20" fill="#d6dbfd"/>
<rect x="1168.36" y="567.80" width="3.26" height="119.20" fill="#8f94f8"/>
<rect x="1168.36" y="689.00" width="3.26" height="198.00" fill="#b3b7f9"/>
<rect x="1168.36" y="889.00" width="3.26" height="157.20" fill="#d6dbfd"/>
<rect x="1172.88" y="567.80" width="3.26" height="99.20" fill="#8f94f8"/>
<rect x="1172.88" y="669.00" width="3.26" height="198.00" fill="#b3b7f9"/>
<rect x="1172.88" y="869.00" width="3.26" height="177.20" fill="#d6dbfd"/>
<rect x="1177.40" y="567.80" width="3.26" height="139.20" fill="#8f94f8"/>
<rect x="1177.40" y="709.00" width="3.26" height="178.00" fill="#b3b7f9"/>
<rect x="1177.40" y="889.00" width="3.26" height="157.20" fill="#d6dbfd"/>
<rect x="1181.92" y="567.80" width="3.26" height="179.20" fill="#8f94f8"/>
<rect x="1181.92" y="749.00" width="3.26" height="178.00" fill="#b3b7f9"/>
<rect x="1181.92" y="929.00" width="3.26" height="117.20" fill="#d6dbfd"/>
<rect x="1186.44" y="567.80" width="3.26" height="179.20" fill="#8f94f8"/>
<rect x="1186.44" y="749.00" width="3.26" height="118.00" fill="#b3b7f9"/>
<rect x="1186.44" y="869.00" width="3.26" height="177.20" fill="#d6dbfd"/>
<rect x="1190.96" y="567.80" width="3.26" height="99.20" fill="#8f94f8"/>
<rect x="1190.96" y="669.00" width="3.26" height="178.00" fill="#b3b7f9"/>
<rect x="1190.96" y="849.00" width="3.26" height="197.20" fill="#d6dbfd"/>
<rect x="1195.48" y="567.80" width="3.26" height="159.20" fill="#8f94f8"/>
<rect x="1195.48" y="729.00" width="3.26" height="138.00" fill="#b3b7f9"/>
<rect x="1195.48" y="869.00" width="3.26" height="177.20" fill="#d6dbfd"/>
<rect x="1200.01" y="567.80" width="3.26" height="159.20" fill="#8f94f8"/>
<rect x="1200.01" y="729.00" width="3.26" height="98.00" fill="#b3b7f9"/>
<rect x="1200.01" y="829.00" width="3.26" height="217.20" fill="#d6dbfd"/>
<rect x="1204.53" y="567.80" width="3.26" height="39.20" fill="#8f94f8"/>
<rect x="1204.53" y="609.00" width="3.26" height="298.00" fill="#b3b7f9"/>
<rect x="1204.53" y="909.00" width="3.26" height="137.20" fill="#d6dbfd"/>
<rect x="1209.05" y="567.80" width="3.26" height="139.20" fill="#8f94f8"/>
<rect x="1209.05" y="709.00" width="3.26" height="278.00" fill="#b3b7f9"/>
<rect x="1209.05" y="989.00" width="3.26" height="57.20" fill="#d6dbfd"/>
<rect x="1213.57" y="567.80" width="3.26" height="179.20" fill="#8f94f8"/>
<rect x="1213.57" y="749.00" width="3.26" height="158.00" fill="#b3b7f9"/>
<rect x="1213.57" y="909.00" width="3.26" height="137.20" fill="#d6dbfd"/>
<rect x="1218.09" y="567.80" width="3.26" height="189.20" fill="#8f94f8"/>
<rect x="1218.09" y="759.00" width="3.26" height="188.00" fill="#b3b7f9"/>
<rect x="1218.09" y="949.00" width="3.26" height="97.20" fill="#d6dbfd"/>
<rect x="1222.61" y="567.80" width="3.26" height="99.20" fill="#8f94f8"/>
<rect x="1222.61" y="669.00" width="3.26" height="158.00" fill="#b3b7f9"/>
<rect x="1222.61" y="829.00" width="3.26" height="217.20" fill="#d6dbfd"/>
<rect x="1227.13" y="567.80" width="3.26" height="139.20" fill="#8f94f8"/>
<rect x="1227.13" y="709.00" width="3.26" height="298.00" fill="#b3b7f9"/>
<rect x="1227.13" y="1009.00" width="3.26" height="37.20" fill="#d6dbfd"/>
<rect x="1231.65" y="567.80" width="3.26" height="159.20" fill="#8f94f8"/>
<rect x="1231.65" y="729.00" width="3.26" height="98.00" fill="#b3b7f9"/>
<rect x="1231.65" y="829.00" width="3.26" height="217.20" fill="#d6dbfd"/>
<rect x="1236.17" y="567.80" width="3.26" height="179.20" fill="#8f94f8"/>
<rect x="1236.17" y="749.00" width="3.26" height="118.00" fill="#b3b7f9"/>
<rect x="1236.17" y="869.00" width="3.26" height="177.20" fill="#d6dbfd"/>
<rect x="1240.69" y="567.80" width="3.26" height="119.20" fill="#8f94f8"/>
<rect x="1240.69" y="689.00" width="3.26" height="118.00" fill="#b3b7f9"/>
<rect x="1240.69" y="809.00" width="3.26" height="237.20" fill="#d6dbfd"/>
<rect x="1245.22" y="567.80" width="3.26" height="139.20" fill="#8f94f8"/>
<rect x="1245.22" y="709.00" width="3.26" height="218.00" fill="#b3b7f9"/>
<rect x="1245.22" y="929.00" width="3.26" height="117.20" fill="#d6dbfd"/>
<rect x="1249.74" y="567.80" width="3.26" height="219.20" fill="#8f94f8"/>
<rect x="1249.74" y="789.00" width="3.26" height="98.00" fill="#b3b7f9"/>
<rect x="1249.74" y="889.00" width="3.26" height="157.20" fill="#d6dbfd"/>
<rect x="1254.26" y="567.80" width="3.26" height="139.20" fill="#8f94f8"/>
<rect x="1254.26" y="709.00" width="3.26" height="158.00" fill="#b3b7f9"/>
<rect x="1254.26" y="869.00" width="3.26" height="177.20" fill="#d6dbfd"/>
<rect x="1258.78" y="567.80" width="3.26" height="139.20" fill="#8f94f8"/>
<rect x="1258.78" y="709.00" width="3.26" height="138.00" fill="#b3b7f9"/>
<rect x="1258.78" y="849.00" width="3.26" height="197.20" fill="#d6dbfd"/>
<rect x="1263.30" y="567.80" width="3.26" height="159.20" fill="#8f94f8"/>
<rect x="1263.30" y="729.00" width="3.26" height="198.00" fill="#b3b7f9"/>
<rect x="1263.30" y="929.00" width="3.26" height="117.20" fill="#d6dbfd"/>
<rect x="1267.82" y="567.80" width="3.26" height="159.20" fill="#8f94f8"/>
<rect x="1267.82" y="729.00" width="3.26" height="178.00" fill="#b3b7f9"/>
<rect x="1267.82" y="909.00" width="3.26" height="137.20" fill="#d6dbfd"/>
<rect x="1272.34" y="567.80" width="3.26" height="119.20" fill="#8f94f8"/>
<rect x="1272.34" y="689.00" width="3.26" height="178.00" fill="#b3b7f9"/>
<rect x="1272.34" y="869.00" width="3.26" height="177.20" fill="#d6dbfd"/>
<rect x="1276.86" y="567.80" width="3.26" height="139.20" fill="#8f94f8"/>
<rect x="1276.86" y="709.00" width="3.26" height="238.00" fill="#b3b7f9"/>
<rect x="1276.86" y="949.00" width="3.26" height="97.20" fill="#d6dbfd"/>
<rect x="1281.38" y="567.80" width="3.26" height="39.20" fill="#8f94f8"/>
<rect x="1281.38" y="609.00" width="3.26" height="238.00" fill="#b3b7f9"/>
<rect x="1281.38" y="849.00" width="3.26" height="197.20" fill="#d6dbfd"/>
<rect x="1285.91" y="567.80" width="3.26" height="119.20" fill="#8f94f8"/>
<rect x="1285.91" y="689.00" width="3.26" height="278.00" fill="#b3b7f9"/>
<rect x="1285.91" y="969.00" width="3.26" height="77.20" fill="#d6dbfd"/>
<rect x="1290.43" y="567.80" width="3.26" height="179.20" fill="#8f94f8"/>
<rect x="1290.43" y="749.00" width="3.26" height="178.00" fill="#b3b7f9"/>
<rect x="1290.43" y="929.00" width="3.26" height="117.20" fill="#d6dbfd"/>
<rect x="1294.95" y="567.80" width="3.26" height="59.20" fill="#8f94f8"/>
<rect x="1294.95" y="629.00" width="3.26" height="238.00" fill="#b3b7f9"/>
<rect x="1294.95" y="869.00" width="3.26" height="177.20" fill="#d6dbfd"/>
<rect x="1299.47" y="567.80" width="3.26" height="119.20" fill="#8f94f8"/>
<rect x="1299.47" y="689.00" width="3.26" height="238.00" fill="#b3b7f9"/>
<rect x="1299.47" y="929.00" width="3.26" height="117.20" fill="#d6dbfd"/>
<rect x="1303.99" y="567.80" width="3.26" height="119.20" fill="#8f94f8"/>
<rect x="1303.99" y="689.00" width="3.26" height="158.00" fill="#b3b7f9"/>
<rect x="1303.99" y="849.00" width="3.26" height="197.20" fill="#d6dbfd"/>
<rect x="1308.51" y="567.80" width="3.26" height="239.20" fill="#8f94f8"/>
<rect x="1308.51" y="809.00" width="3.26" height="118.00" fill="#b3b7f9"/>
<rect x="1308.51" y="929.00" width="3.26" height="117.20" fill="#d6dbfd"/>
<rect x="1313.03" y="567.80" width="3.26" height="119.20" fill="#8f94f8"/>
<rect x="1313.03" y="689.00" width="3.26" height="198.00" fill="#b3b7f9"/>
<rect x="1313.03" y="889.00" width="3.26" height="157.20" fill="#d6dbfd"/>
<rect x="1317.55" y="567.80" width="3.26" height="99.20" fill="#8f94f8"/>
<rect x="1317.55" y="669.00" width="3.26" height="158.00" fill="#b3b7f9"/>
<rect x="1317.55" y="829.00" width="3.26" height="217.20" fill="#d6dbfd"/>
<rect x="1322.07" y="567.80" width="3.26" height="79.20" fill="#8f94f8"/>
<rect x="1322.07" y="649.00" width="3.26" height="218.00" fill="#b3b7f9"/>
<rect x="1322.07" y="869.00" width="3.26" height="177.20" fill="#d6dbfd"/>
<rect x="1326.60" y="567.80" width="3.26" height="119.20" fill="#8f94f8"/>
<rect x="1326.60" y="689.00" width="3.26" height="138.00" fill="#b3b7f9"/>
<rect x="1326.60" y="829.00" width="3.26" height="217.20" fill="#d6dbfd"/>
<rect x="1331.12" y="567.80" width="3.26" height="79.20" fill="#8f94f8"/>
<rect x="1331.12" y="649.00" width="3.26" height="158.00" fill="#b3b7f9"/>
<rect x="1331.12" y="809.00" width="3.26" height="237.20" fill="#d6dbfd"/>
<rect x="1335.64" y="567.80" width="3.26" height="99.20" fill="#8f94f8"/>
<rect x="1335.64" y="669.00" width="3.26" height="178.00" fill="#b3b7f9"/>
<rect x="1335.64" y="849.00" width="3.26" height="197.20" fill="#d6dbfd"/>
<rect x="1340.16" y="567.80" width="3.26" height="139.20" fill="#8f94f8"/>
<rect x="1340.16" y="709.00" width="3.26" height="138.00" fill="#b3b7f9"/>
<rect x="1340.16" y="849.00" width="3.26" height="197.20" fill="#d6dbfd"/>
<rect x="1344.68" y="567.80" width="3.26" height="99.20" fill="#8f94f8"/>
<rect x="1344.68" y="669.00" width="3.26" height="178.00" fill="#b3b7f9"/>
<rect x="1344.68" y="849.00" width="3.26" height="197.20" fill="#d6dbfd"/>
<rect x="1349.20" y="567.80" width="3.26" height="119.20" fill="#8f94f8"/>
<rect x="1349.20" y="689.00" width="3.26" height="218.00" fill="#b3b7f9"/>
<rect x="1349.20" y="909.00" width="3.26" height="137.20" fill="#d6dbfd"/>
<rect x="1353.72" y="567.80" width="3.26" height="179.20" fill="#8f94f8"/>
<rect x="1353.72" y="749.00" width="3.26" height="138.00" fill="#b3b7f9"/>
<rect x="1353.72" y="889.00" width="3.26" height="157.20" fill="#d6dbfd"/>
<rect x="1358.24" y="567.80" width="3.26" height="119.20" fill="#8f94f8"/>
<rect x="1358.24" y="689.00" width="3.26" height="198.00" fill="#b3b7f9"/>
<rect x="1358.24" y="889.00" width="3.26" height="157.20" fill="#d6dbfd"/>
<rect x="1362.76" y="567.80" width="3.26" height="159.20" fill="#8f94f8"/>
<rect x="1362.76" y="729.00" width="3.26" height="178.00" fill="#b3b7f9"/>
<rect x="1362.76" y="909.00" width="3.26" height="137.20" fill="#d6dbfd"/>
<rect x="1367.29" y="567.80" width="3.26" height="139.20" fill="#8f94f8"/>
<rect x="1367.29" y="709.00" width="3.26" height="218.00" fill="#b3b7f9"/>
<rect x="1367.29" y="929.00" width="3.26" height="117.20" fill="#d6dbfd"/>
<rect x="1371.81" y="567.80" width="3.26" height="219.20" fill="#8f94f8"/>
<rect x="1371.81" y="789.00" width="3.26" height="118.00" fill="#b3b7f9"/>
<rect x="1371.81" y="909.00" width="3.26" height="137.20" fill="#d6dbfd"/>
<rect x="1376.33" y="567.80" width="3.26" height="159.20" fill="#8f94f8"/>
<rect x="1376.33" y="729.00" width="3.26" height="158.00" fill="#b3b7f9"/>
<rect x="1376.33" y="889.00" width="3.26" height="157.20" fill="#d6dbfd"/>
<rect x="1380.85" y="567.80" width="3.26" height="179.20" fill="#8f94f8"/>
<rect x="1380.85" y="749.00" width="3.26" height="138.00" fill="#b3b7f9"/>
<rect x="1380.85" y="889.00" width="3.26" height="157.20" fill="#d6dbfd"/>
<rect x="1385.37" y="567.80" width="3.26" height="119.20" fill="#8f94f8"/>
<rect x="1385.37" y="689.00" width="3.26" height="158.00" fill="#b3b7f9"/>
<rect x="1385.37" y="849.00" width="3.26" height="197.20" fill="#d6dbfd"/>
<rect x="1389.89" y="567.80" width="3.26" height="199.20" fill="#8f94f8"/>
<rect x="1389.89" y="769.00" width="3.26" height="98.00" fill="#b3b7f9"/>
<rect x="1389.89" y="869.00" width="3.26" height="177.20" fill="#d6dbfd"/>
<rect x="1394.41" y="567.80" width="3.26" height="99.20" fill="#8f94f8"/>
<rect x="1394.41" y="669.00" width="3.26" height="198.00" fill="#b3b7f9"/>
<rect x="1394.41" y="869.00" width="3.26" height="177.20" fill="#d6dbfd"/>
<rect x="1398.93" y="567.80" width="3.26" height="199.20" fill="#8f94f8"/>
<rect x="1398.93" y="769.00" width="3.26" height="118.00" fill="#b3b7f9"/>
<rect x="1398.93" y="889.00" width="3.26" height="157.20" fill="#d6dbfd"/>
<rect x="1403.45" y="567.80" width="3.26" height="119.20" fill="#8f94f8"/>
<rect x="1403.45" y="689.00" width="3.26" height="178.00" fill="#b3b7f9"/>
<rect x="1403.45" y="869.00" width="3.26" height="177.20" fill="#d6dbfd"/>
<rect x="1407.98" y="567.80" width="3.26" height="179.20" fill="#8f94f8"/>
<rect x="1407.98" y="749.00" width="3.26" height="198.00" fill="#b3b7f9"/>
<rect x="1407.98" y="949.00" width="3.26" height="97.20" fill="#d6dbfd"/>
<rect x="1412.50" y="567.80" width="3.26" height="99.20" fill="#8f94f8"/>
<rect x="1412.50" y="669.00" width="3.26" height="258.00" fill="#b3b7f9"/>
<rect x="1412.50" y="929.00" width="3.26" height="117.20" fill="#d6dbfd"/>
<rect x="1417.02" y="567.80" width="3.26" height="199.20" fill="#8f94f8"/>
<rect x="1417.02" y="769.00" width="3.26" height="138.00" fill="#b3b7f9"/>
<rect x="1417.02" y="909.00" width="3.26" height="137.20" fill="#d6dbfd"/>
<rect x="1421.54" y="567.80" width="3.26" height="39.20" fill="#8f94f8"/>
<rect x="1421.54" y="609.00" width="3.26" height="238.00" fill="#b3b7f9"/>
<rect x="1421.54" y="849.00" width="3.26" height="197.20" fill="#d6dbfd"/>
<rect x="1426.06" y="567.80" width="3.26" height="79.20" fill="#8f94f8"/>
<rect x="1426.06" y="649.00" width="3.26" height="178.00" fill="#b3b7f9"/>
<rect x="1426.06" y="829.00" width="3.26" height="217.20" fill="#d6dbfd"/>
<rect x="1430.58" y="567.80" width="3.26" height="139.20" fill="#8f94f8"/>
<rect x="1430.58" y="709.00" width="3.26" height="198.00" fill="#b3b7f9"/>
<rect x="1430.58" y="909.00" width="3.26" height="137.20" fill="#d6dbfd"/>
<rect x="1435.10" y="567.80" width="3.26" height="199.20" fill="#8f94f8"/>
<rect x="1435.10" y="769.00" width="3.26" height="118.00" fill="#b3b7f9"/>
<rect x="1435.10" y="889.00" width="3.26" height="157.20" fill="#d6dbfd"/>
<rect x="1439.62" y="567.80" width="3.26" height="159.20" fill="#8f94f8"/>
<rect x="1439.62" y="729.00" width="3.26" height="158.00" fill="#b3b7f9"/>
<rect x="1439.62" y="889.00" width="3.26" height="157.20" fill="#d6dbfd"/>
<rect x="1444.14" y="567.80" width="3.26" height="159.20" fill="#8f94f8"/>
<rect x="1444.14" y="729.00" width="3.26" height="178.00" fill="#b3b7f9"/>
<rect x="1444.14" y="909.00" width="3.26" height="137.20" fill="#d6dbfd"/>
<rect x="1448.67" y="567.80" width="3.26" height="139.20" fill="#8f94f8"/>
<rect x="1448.67" y="709.00" width="3.26" height="238.00" fill="#b3b7f9"/>
<rect x="1448.67" y="949.00" width="3.26" height="97.20" fill="#d6dbfd"/>
<rect x="1453.19" y="567.80" width="3.26" height="119.20" fill="#8f94f8"/>
<rect x="1453.19" y="689.00" width="3.26" height="258.00" fill="#b3b7f9"/>
<rect x="1453.19" y="949.00" width="3.26" height="97.20" fill="#d6dbfd"/>
<rect x="1457.71" y="567.80" width="3.26" height="139.20" fill="#8f94f8"/>
<rect x="1457.71" y="709.00" width="3.26" height="238.00" fill="#b3b7f9"/>
<rect x="1457.71" y="949.00" width="3.26" height="97.20" fill="#d6dbfd"/>
<rect x="1462.23" y="567.80" width="3.26" height="119.20" fill="#8f94f8"/>
<rect x="1462.23" y="689.00" width="3.26" height="118.00" fill="#b3b7f9"/>
<rect x="1462.23" y="809.00" width="3.26" height="237.20" fill="#d6dbfd"/>
<rect x="1466.75" y="567.80" width="3.26" height="139.20" fill="#8f94f8"/>
<rect x="1466.75" y="709.00" width="3.26" height="218.00" fill="#b3b7f9"/>
<rect x="1466.75" y="929.00" width="3.26" height="117.20" fill="#d6dbfd"/>
<rect x="1471.27" y="567.80" width="3.26" height="59.20" fill="#8f94f8"/>
<rect x="1471.27" y="629.00" width="3.26" height="238.00" fill="#b3b7f9"/>
<rect x="1471.27" y="869.00" width="3.26" height="177.20" fill="#d6dbfd"/>
<rect x="1475.79" y="567.80" width="3.26" height="139.20" fill="#8f94f8"/>
<rect x="1475.79" y="709.00" width="3.26" height="198.00" fill="#b3b7f9"/>
<rect x="1475.79" y="909.00" width="3.26" height="137.20" fill="#d6dbfd"/>
<rect x="1480.31" y="567.80" width="3.26" height="199.20" fill="#8f94f8"/>
<rect x="1480.31" y="769.00" width="3.26" height="178.00" fill="#b3b7f9"/>
<rect x="1480.31" y="949.00" width="3.26" height="97.20" fill="#d6dbfd"/>
<rect x="1484.83" y="567.80" width="3.26" height="199.20" fill="#8f94f8"/>
<rect x="1484.83" y="769.00" width="3.26" height="138.00" fill="#b3b7f9"/>
<rect x="1484.83" y="909.00" width="3.26" height="137.20" fill="#d6dbfd"/>
<rect x="1489.36" y="567.80" width="3.26" height="119.20" fill="#8f94f8"/>
<rect x="1489.36" y="689.00" width="3.26" height="218.00" fill="#b3b7f9"/>
<rect x="1489.36" y="909.00" width="3.26" height="137.20" fill="#d6dbfd"/>
<rect x="1493.88" y="567.80" width="3.26" height="219.20" fill="#8f94f8"/>
<rect x="1493.88" y="789.00" width="3.26" height="98.00" fill="#b3b7f9"/>
<rect x="1493.88" y="889.00" width="3.26" height="157.20" fill="#d6dbfd"/>
<rect x="1498.40" y="567.80" width="3.26" height="119.20" fill="#8f94f8"/>
<rect x="1498.40" y="689.00" width="3.26" height="158.00" fill="#b3b7f9"/>
<rect x="1498.40" y="849.00" width="3.26" height="197.20" fill="#d6dbfd"/>
<rect x="1502.92" y="567.80" width="3.26" height="219.20" fill="#8f94f8"/>
<rect x="1502.92" y="789.00" width="3.26" height="178.00" fill="#b3b7f9"/>
<rect x="1502.92" y="969.00" width="3.26" height="77.20" fill="#d6dbfd"/>
<rect x="1507.44" y="567.80" width="3.26" height="219.20" fill="#8f94f8"/>
<rect x="1507.44" y="789.00" width="3.26" height="118.00" fill="#b3b7f9"/>
<rect x="1507.44" y="909.00" width="3.26" height="137.20" fill="#d6dbfd"/>
<rect x="1511.96" y="567.80" width="3.26" height="79.20" fill="#8f94f8"/>
<rect x="1511.96" y="649.00" width="3.26" height="218.00" fill="#b3b7f9"/>
<rect x="1511.96" y="869.00" width="3.26" height="177.20" fill="#d6dbfd"/>
<rect x="1516.48" y="567.80" width="3.26" height="219.20" fill="#8f94f8"/>
<rect x="1516.48" y="789.00" width="3.26" height="98.00" fill="#b3b7f9"/>
<rect x="1516.48" y="889.00" width="3.26" height="157.20" fill="#d6dbfd"/>
<rect x="1521.00" y="567.80" width="3.26" height="219.20" fill="#8f94f8"/>
<rect x="1521.00" y="789.00" width="3.26" height="138.00" fill="#b3b7f9"/>
<rect x="1521.00" y="929.00" width="3.26" height="117.20" fill="#d6dbfd"/>
<rect x="1525.52" y="567.80" width="3.26" height="139.20" fill="#8f94f8"/>
<rect x="1525.52" y="709.00" width="3.26" height="258.00" fill="#b3b7f9"/>
<rect x="1525.52" y="969.00" width="3.26" height="77.20" fill="#d6dbfd"/>
<rect x="1530.05" y="567.80" width="3.26" height="239.20" fill="#8f94f8"/>
<rect x="1530.05" y="809.00" width="3.26" height="98.00" fill="#b3b7f9"/>
<rect x="1530.05" y="909.00" width="3.26" height="137.20" fill="#d6dbfd"/>
<rect x="1534.57" y="567.80" width="3.26" height="179.20" fill="#8f94f8"/>
<rect x="1534.57" y="749.00" width="3.26" height="158.00" fill="#b3b7f9"/>
<rect x="1534.57" y="909.00" width="3.26" height="137.20" fill="#d6dbfd"/>
<rect x="1539.09" y="567.80" width="3.26" height="199.20" fill="#8f94f8"/>
<rect x="1539.09" y="769.00" width="3.26" height="118.00" fill="#b3b7f9"/>
<rect x="1539.09" y="889.00" width="3.26" height="157.20" fill="#d6dbfd"/>
<rect x="1543.61" y="567.80" width="3.26" height="79.20" fill="#8f94f8"/>
<rect x="1543.61" y="649.00" width="3.26" height="258.00" fill="#b3b7f9"/>
<rect x="1543.61" y="909.00" width="3.26" height="137.20" fill="#d6dbfd"/>
<rect x="1548.13" y="567.80" width="3.26" height="139.20" fill="#8f94f8"/>
<rect x="1548.13" y="709.00" width="3.26" height="138.00" fill="#b3b7f9"/>
<rect x="1548.13" y="849.00" width="3.26" height="197.20" fill="#d6dbfd"/>
<rect x="1552.65" y="567.80" width="3.26" height="139.20" fill="#8f94f8"/>
<rect x="1552.65" y="709.00" width="3.26" height="258.00" fill="#b3b7f9"/>
<rect x="1552.65" y="969.00" width="3.26" height="77.20" fill="#d6dbfd"/>
<rect x="1557.17" y="567.80" width="3.26" height="139.20" fill="#8f94f8"/>
<rect x="1557.17" y="709.00" width="3.26" height="198.00" fill="#b3b7f9"/>
<rect x="1557.17" y="909.00" width="3.26" height="137.20" fill="#d6dbfd"/>
<rect x="1561.69" y="567.80" width="3.26" height="179.20" fill="#8f94f8"/>
<rect x="1561.69" y="749.00" width="3.26" height="138.00" fill="#b3b7f9"/>
<rect x="1561.69" y="889.00" width="3.26" height="157.20" fill="#d6dbfd"/>
<rect x="1566.21" y="567.80" width="3.26" height="199.20" fill="#8f94f8"/>
<rect x="1566.21" y="769.00" width="3.26" height="118.00" fill="#b3b7f9"/>
<rect x="1566.21" y="889.00" width="3.26" height="157.20" fill="#d6dbfd"/>
<rect x="1570.73" y="567.80" width="3.26" height="159.20" fill="#8f94f8"/>
<rect x="1570.73" y="729.00" width="3.26" height="178.00" fill="#b3b7f9"/>
<rect x="1570.73" y="909.00" width="3.26" height="137.20" fill="#d6dbfd"/>
<rect x="1575.26" y="567.80" width="3.26" height="99.20" fill="#8f94f8"/>
<rect x="1575.26" y="669.00" width="3.26" height="118.00" fill="#b3b7f9"/>
<rect x="1575.26" y="789.00" width="3.26" height="257.20" fill="#d6dbfd"/>
<rect x="1579.78" y="567.80" width="3.26" height="99.20" fill="#8f94f8"/>
<rect x="1579.78" y="669.00" width="3.26" height="198.00" fill="#b3b7f9"/>
<rect x="1579.78" y="869.00" width="3.26" height="177.20" fill="#d6dbfd"/>
<rect x="1584.30" y="567.80" width="3.26" height="99.20" fill="#8f94f8"/>
<rect x="1584.30" y="669.00" width="3.26" height="178.00" fill="#b3b7f9"/>
<rect x="1584.30" y="849.00" width="3.26" height="197.20" fill="#d6dbfd"/>
<rect x="1588.82" y="567.80" width="3.26" height="159.20" fill="#8f94f8"/>
<rect x="1588.82" y="729.00" width="3.26" height="158.00" fill="#b3b7f9"/>
<rect x="1588.82" y="889.00" width="3.26" height="157.20" fill="#d6dbfd"/>
<rect x="1593.34" y="567.80" width="3.26" height="99.20" fill="#8f94f8"/>
<rect x="1593.34" y="669.00" width="3.26" height="218.00" fill="#b3b7f9"/>
<rect x="1593.34" y="889.00" width="3.26" height="157.20" fill="#d6dbfd"/>
<rect x="1597.86" y="567.80" width="3.26" height="179.20" fill="#8f94f8"/>
<rect x="1597.86" y="749.00" width="3.26" height="218.00" fill="#b3b7f9"/>
<rect x="1597.86" y="969.00" width="3.26" height="77.20" fill="#d6dbfd"/>
<rect x="1602.38" y="567.80" width="3.26" height="119.20" fill="#8f94f8"/>
<rect x="1602.38" y="689.00" width="3.26" height="138.00" fill="#b3b7f9"/>
<rect x="1602.38" y="829.00" width="3.26" height="217.20" fill="#d6dbfd"/>
<rect x="1606.90" y="567.80" width="3.26" height="159.20" fill="#8f94f8"/>
<rect x="1606.90" y="729.00" width="3.26" height="218.00" fill="#b3b7f9"/>
<rect x="1606.90" y="949.00" width="3.26" height="97.20" fill="#d6dbfd"/>
<rect x="1611.42" y="567.80" width="3.26" height="139.20" fill="#8f94f8"/>
<rect x="1611.42" y="709.00" width="3.26" height="118.00" fill="#b3b7f9"/>
<rect x="1611.42" y="829.00" width="3.26" height="217.20" fill="#d6dbfd"/>
<rect x="1615.95" y="567.80" width="3.26" height="119.20" fill="#8f94f8"/>
<rect x="1615.95" y="689.00" width="3.26" height="218.00" fill="#b3b7f9"/>
<rect x="1615.95" y="909.00" width="3.26" height="137.20" fill="#d6dbfd"/>
<rect x="1620.47" y="567.80" width="3.26" height="19.20" fill="#8f94f8"/>
<rect x="1620.47" y="589.00" width="3.26" height="278.00" fill="#b3b7f9"/>
<rect x="1620.47" y="869.00" width="3.26" height="177.20" fill="#d6dbfd"/>
<rect x="1624.99" y="567.80" width="3.26" height="79.20" fill="#8f94f8"/>
<rect x="1624.99" y="649.00" width="3.26" height="258.00" fill="#b3b7f9"/>
<rect x="1624.99" y="909.00" width="3.26" height="137.20" fill="#d6dbfd"/>
<rect x="1629.51" y="567.80" width="3.26" height="139.20" fill="#8f94f8"/>
<rect x="1629.51" y="709.00" width="3.26" height="138.00" fill="#b3b7f9"/>
<rect x="1629.51" y="849.00" width="3.26" height="197.20" fill="#d6dbfd"/>
<rect x="1634.03" y="567.80" width="3.26" height="139.20" fill="#8f94f8"/>
<rect x="1634.03" y="709.00" width="3.26" height="238.00" fill="#b3b7f9"/>
<rect x="1634.03" y="949.00" width="3.26" height="97.20" fill="#d6dbfd"/>
<rect x="1638.55" y="567.80" width="3.26" height="199.20" fill="#8f94f8"/>
<rect x="1638.55" y="769.00" width="3.26" height="118.00" fill="#b3b7f9"/>
<rect x="1638.55" y="889.00" width="3.26" height="157.20" fill="#d6dbfd"/>
<rect x="1643.07" y="567.80" width="3.26" height="139.20" fill="#8f94f8"/>
<rect x="1643.07" y="709.00" width="3.26" height="218.00" fill="#b3b7f9"/>
<rect x="1643.07" y="929.00" width="3.26" height="117.20" fill="#d6dbfd"/>
<rect x="1647.59" y="567.80" width="3.26" height="159.20" fill="#8f94f8"/>
<rect x="1647.59" y="729.00" width="3.26" height="238.00" fill="#b3b7f9"/>
<rect x="1647.59" y="969.00" width="3.26" height="77.20" fill="#d6dbfd"/>
<rect x="1652.11" y="567.80" width="3.26" height="119.20" fill="#8f94f8"/>
<rect x="1652.11" y="689.00" width="3.26" height="178.00" fill="#b3b7f9"/>
<rect x="1652.11" y="869.00" width="3.26" height="177.20" fill="#d6dbfd"/>
<rect x="1656.64" y="567.80" width="3.26" height="139.20" fill="#8f94f8"/>
<rect x="1656.64" y="709.00" width="3.26" height="258.00" fill="#b3b7f9"/>
<rect x="1656.64" y="969.00" width="3.26" height="77.20" fill="#d6dbfd"/>
<rect x="1661.16" y="567.80" width="3.26" height="159.20" fill="#8f94f8"/>
<rect x="1661.16" y="729.00" width="3.26" height="258.00" fill="#b3b7f9"/>
<rect x="1661.16" y="989.00" width="3.26" height="57.20" fill="#d6dbfd"/>
<rect x="1665.68" y="567.80" width="3.26" height="119.20" fill="#8f94f8"/>
<rect x="1665.68" y="689.00" width="3.26" height="258.00" fill="#b3b7f9"/>
<rect x="1665.68" y="949.00" width="3.26" height="97.20" fill="#d6dbfd"/>
<rect x="1670.20" y="567.80" width="3.26" height="99.20" fill="#8f94f8"/>
<rect x="1670.20" y="669.00" width="3.26" height="178.00" fill="#b3b7f9"/>
<rect x="1670.20" y="849.00" width="3.26" height="197.20" fill="#d6dbfd"/>
<rect x="1674.72" y="567.80" width="3.26" height="159.20" fill="#8f94f8"/>
<rect x="1674.72" y="729.00" width="3.26" height="158.00" fill="#b3b7f9"/>
<rect x="1674.72" y="889.00" width="3.26" height="157.20" fill="#d6dbfd"/>
<rect x="1679.24" y="567.80" width="3.26" height="119.20" fill="#8f94f8"/>
<rect x="1679.24" y="689.00" width="3.26" height="138.00" fill="#b3b7f9"/>
<rect x="1679.24" y="829.00" width="3.26" height="217.20" fill="#d6dbfd"/>
<rect x="1683.76" y="567.80" width="3.26" height="139.20" fill="#8f94f8"/>
<rect x="1683.76" y="709.00" width="3.26" height="178.00" fill="#b3b7f9"/>
<rect x="1683.76" y="889.00" width="3.26" height="157.20" fill="#d6dbfd"/>
<rect x="1688.28" y="567.80" width="3.26" height="179.20" fill="#8f94f8"/>
<rect x="1688.28" y="749.00" width="3.26" height="138.00" fill="#b3b7f9"/>
<rect x="1688.28" y="889.00" width="3.26" height="157.20" fill="#d6dbfd"/>
<rect x="1692.80" y="567.80" width="3.26" height="199.20" fill="#8f94f8"/>
<rect x="1692.80" y="769.00" width="3.26" height="98.00" fill="#b3b7f9"/>
<rect x="1692.80" y="869.00" width="3.26" height="177.20" fill="#d6dbfd"/>
<rect x="1697.33" y="567.80" width="3.26" height="239.20" fill="#8f94f8"/>
<rect x="1697.33" y="809.00" width="3.26" height="118.00" fill="#b3b7f9"/>
<rect x="1697.33" y="929.00" width="3.26" height="117.20" fill="#d6dbfd"/>
<rect x="1701.85" y="567.80" width="3.26" height="99.20" fill="#8f94f8"/>
<rect x="1701.85" y="669.00" width="3.26" height="238.00" fill="#b3b7f9"/>
<rect x="1701.85" y="909.00" width="3.26" height="137.20" fill="#d6dbfd"/>
<rect x="1706.37" y="567.80" width="3.26" height="139.20" fill="#8f94f8"/>
<rect x="1706.37" y="709.00" width="3.26" height="198.00" fill="#b3b7f9"/>
<rect x="1706.37" y="909.00" width="3.26" height="137.20" fill="#d6dbfd"/>
<rect x="1710.89" y="567.80" width="3.26" height="139.20" fill="#8f94f8"/>
<rect x="1710.89" y="709.00" width="3.26" height="238.00" fill="#b3b7f9"/>
<rect x="1710.89" y="949.00" width="3.26" height="97.20" fill="#d6dbfd"/>
<rect x="1715.41" y="567.80" width="3.26" height="119.20" fill="#8f94f8"/>
<rect x="1715.41" y="689.00" width="3.26" height="158.00" fill="#b3b7f9"/>
<rect x="1715.41" y="849.00" width="3.26" height="197.20" fill="#d6dbfd"/>
<rect x="1719.93" y="567.80" width="3.26" height="179.20" fill="#8f94f8"/>
<rect x="1719.93" y="749.00" width="3.26" height="78.00" fill="#b3b7f9"/>
<rect x="1719.93" y="829.00" width="3.26" height="217.20" fill="#d6dbfd"/>
<rect x="1724.45" y="567.80" width="3.26" height="139.20" fill="#8f94f8"/>
<rect x="1724.45" y="709.00" width="3.26" height="158.00" fill="#b3b7f9"/>
<rect x="1724.45" y="869.00" width="3.26" height="177.20" fill="#d6dbfd"/>
<rect x="1728.97" y="567.80" width="3.26" height="119.20" fill="#8f94f8"/>
<rect x="1728.97" y="689.00" width="3.26" height="218.00" fill="#b3b7f9"/>
<rect x="1728.97" y="909.00" width="3.26" height="137.20" fill="#d6dbfd"/>
<rect x="1733.49" y="567.80" width="3.26" height="179.20" fill="#8f94f8"/>
<rect x="1733.49" y="749.00" width="3.26" height="218.00" fill="#b3b7f9"/>
<rect x="1733.49" y="969.00" width="3.26" height="77.20" fill="#d6dbfd"/>
<rect x="1738.02" y="567.80" width="3.26" height="159.20" fill="#8f94f8"/>
<rect x="1738.02" y="729.00" width="3.26" height="238.00" fill="#b3b7f9"/>
<rect x="1738.02" y="969.00" width="3.26" height="77.20" fill="#d6dbfd"/>
<rect x="1742.54" y="567.80" width="3.26" height="159.20" fill="#8f94f8"/>
<rect x="1742.54" y="729.00" width="3.26" height="198.00" fill="#b3b7f9"/>
<rect x="1742.54" y="929.00" width="3.26" height="117.20" fill="#d6dbfd"/>
<rect x="1747.06" y="567.80" width="3.26" height="99.20" fill="#8f94f8"/>
<rect x="1747.06" y="669.00" width="3.26" height="278.00" fill="#b3b7f9"/>
<rect x="1747.06" y="949.00" width="3.26" height="97.20" fill="#d6dbfd"/>
<rect x="1751.58" y="567.80" width="3.26" height="159.20" fill="#8f94f8"/>
<rect x="1751.58" y="729.00" width="3.26" height="178.00" fill="#b3b7f9"/>
<rect x="1751.58" y="909.00" width="3.26" height="137.20" fill="#d6dbfd"/>
<rect x="1756.10" y="567.80" width="3.26" height="159.20" fill="#8f94f8"/>
<rect x="1756.10" y="729.00" width="3.26" height="178.00" fill="#b3b7f9"/>
<rect x="1756.10" y="909.00" width="3.26" height="137.20" fill="#d6dbfd"/>
<rect x="1760.62" y="567.80" width="3.26" height="139.20" fill="#8f94f8"/>
<rect x="1760.62" y="709.00" width="3.26" height="218.00" fill="#b3b7f9"/>
<rect x="1760.62" y="929.00" width="3.26" height="117.20" fill="#d6dbfd"/>
<rect x="1765.14" y="567.80" width="3.26" height="119.20" fill="#8f94f8"/>
<rect x="1765.14" y="689.00" width="3.26" height="218.00" fill="#b3b7f9"/>
<rect x="1765.14" y="909.00" width="3.26" height="137.20" fill="#d6dbfd"/>
<rect x="1769.66" y="567.80" width="3.26" height="219.20" fill="#8f94f8"/>
<rect x="1769.66" y="789.00" width="3.26" height="118.00" fill="#b3b7f9"/>
<rect x="1769.66" y="909.00" width="3.26" height="137.20" fill="#d6dbfd"/>
<rect x="1774.18" y="567.80" width="3.26" height="59.20" fill="#8f94f8"/>
<rect x="1774.18" y="629.00" width="3.26" height="218.00" fill="#b3b7f9"/>
<rect x="1774.18" y="849.00" width="3.26" height="197.20" fill="#d6dbfd"/>
<rect x="1778.71" y="567.80" width="3.26" height="139.20" fill="#8f94f8"/>
<rect x="1778.71" y="709.00" width="3.26" height="178.00" fill="#b3b7f9"/>
<rect x="1778.71" y="889.00" width="3.26" height="157.20" fill="#d6dbfd"/>
<rect x="1783.23" y="567.80" width="3.26" height="139.20" fill="#8f94f8"/>
<rect x="1783.23" y="709.00" width="3.26" height="198.00" fill="#b3b7f9"/>
<rect x="1783.23" y="909.00" width="3.26" height="137.20" fill="#d6dbfd"/>
<rect x="1787.75" y="567.80" width="3.26" height="99.20" fill="#8f94f8"/>
<rect x="1787.75" y="669.00" width="3.26" height="178.00" fill="#b3b7f9"/>
<rect x="1787.75" y="849.00" width="3.26" height="197.20" fill="#d6dbfd"/>
<rect x="1792.27" y="567.80" width="3.26" height="119.20" fill="#8f94f8"/>
<rect x="1792.27" y="689.00" width="3.26" height="198.00" fill="#b3b7f9"/>
<rect x="1792.27" y="889.00" width="3.26" height="157.20" fill="#d6dbfd"/>
<rect x="1796.79" y="567.80" width="3.26" height="199.20" fill="#8f94f8"/>
<rect x="1796.79" y="769.00" width="3.26" height="158.00" fill="#b3b7f9"/>
<rect x="1796.79" y="929.00" width="3.26" height="117.20" fill="#d6dbfd"/>
<rect x="1801.31" y="567.80" width="3.26" height="119.20" fill="#8f94f8"/>
<rect x="1801.31" y="689.00" width="3.26" height="198.00" fill="#b3b7f9"/>
<rect x="1801.31" y="889.00" width="3.26" height="157.20" fill="#d6dbfd"/>
<rect x="1805.83" y="567.80" width="3.26" height="219.20" fill="#8f94f8"/>
<rect x="1805.83" y="789.00" width="3.26" height="98.00" fill="#b3b7f9"/>
<rect x="1805.83" y="889.00" width="3.26" height="157.20" fill="#d6dbfd"/>
<rect x="1810.35" y="567.80" width="3.26" height="139.20" fill="#8f94f8"/>
<rect x="1810.35" y="709.00" width="3.26" height="158.00" fill="#b3b7f9"/>
<rect x="1810.35" y="869.00" width="3.26" height="177.20" fill="#d6dbfd"/>
<rect x="1814.87" y="567.80" width="3.26" height="199.20" fill="#8f94f8"/>
<rect x="1814.87" y="769.00" width="3.26" height="158.00" fill="#b3b7f9"/>
<rect x="1814.87" y="929.00" width="3.26" height="117.20" fill="#d6dbfd"/>
<rect x="1819.40" y="567.80" width="3.26" height="119.20" fill="#8f94f8"/>
<rect x="1819.40" y="689.00" width="3.26" height="238.00" fill="#b3b7f9"/>
<rect x="1819.40" y="929.00" width="3.26" height="117.20" fill="#d6dbfd"/>
<rect x="1823.92" y="567.80" width="3.26" height="179.20" fill="#8f94f8"/>
<rect x="1823.92" y="749.00" width="3.26" height="158.00" fill="#b3b7f9"/>
<rect x="1823.92" y="909.00" width="3.26" height="137.20" fill="#d6dbfd"/>
<rect x="1828.44" y="567.80" width="3.26" height="99.20" fill="#8f94f8"/>
<rect x="1828.44" y="669.00" width="3.26" height="278.00" fill="#b3b7f9"/>
<rect x="1828.44" y="949.00" width="3.26" height="97.20" fill="#d6dbfd"/>
<rect x="1832.96" y="567.80" width="3.26" height="199.20" fill="#8f94f8"/>
<rect x="1832.96" y="769.00" width="3.26" height="138.00" fill="#b3b7f9"/>
<rect x="1832.96" y="909.00" width="3.26" height="137.20" fill="#d6dbfd"/>
<rect x="1837.48" y="567.80" width="3.26" height="179.20" fill="#8f94f8"/>
<rect x="1837.48" y="749.00" width="3.26" height="138.00" fill="#b3b7f9"/>
<rect x="1837.48" y="889.00" width="3.26" height="157.20" fill="#d6dbfd"/>
<rect x="1842.00" y="567.80" width="3.26" height="179.20" fill="#8f94f8"/>
<rect x="1842.00" y="749.00" width="3.26" height="178.00" fill="#b3b7f9"/>
<rect x="1842.00" y="929.00" width="3.26" height="117.20" fill="#d6dbfd"/>
<rect x="1846.52" y="567.80" width="3.26" height="99.20" fill="#8f94f8"/>
<rect x="1846.52" y="669.00" width="3.26" height="178.00" fill="#b3b7f9"/>
<rect x="1846.52" y="849.00" width="3.26" height="197.20" fill="#d6dbfd"/>
<rect x="1851.04" y="567.80" width="3.26" height="119.20" fill="#8f94f8"/>
<rect x="1851.04" y="689.00" width="3.26" height="198.00" fill="#b3b7f9"/>
<rect x="1851.04" y="889.00" width="3.26" height="157.20" fill="#d6dbfd"/>
<rect x="1855.56" y="567.80" width="3.26" height="159.20" fill="#8f94f8"/>
<rect x="1855.56" y="729.00" width="3.26" height="218.00" fill="#b3b7f9"/>
<rect x="1855.56" y="949.00" width="3.26" height="97.20" fill="#d6dbfd"/>
<rect x="1860.09" y="567.80" width="3.26" height="179.20" fill="#8f94f8"/>
<rect x="1860.09" y="749.00" width="3.26" height="178.00" fill="#b3b7f9"/>
<rect x="1860.09" y="929.00" width="3.26" height="117.20" fill="#d6dbfd"/>
<rect x="1864.61" y="567.80" width="3.26" height="139.20" fill="#8f94f8"/>
<rect x="1864.61" y="709.00" width="3.26" height="238.00" fill="#b3b7f9"/>
<rect x="1864.61" y="949.00" width="3.26" height="97.20" fill="#d6dbfd"/>
<rect x="1869.13" y="567.80" width="3.26" height="199.20" fill="#8f94f8"/>
<rect x="1869.13" y="769.00" width="3.26" height="98.00" fill="#b3b7f9"/>
<rect x="1869.13" y="869.00" width="3.26" height="177.20" fill="#d6dbfd"/>
<rect x="1873.65" y="567.80" width="3.26" height="199.20" fill="#8f94f8"/>
<rect x="1873.65" y="769.00" width="3.26" height="158.00" fill="#b3b7f9"/>
<rect x="1873.65" y="929.00" width="3.26" height="117.20" fill="#d6dbfd"/>
<rect x="1878.17" y="567.80" width="3.26" height="179.20" fill="#8f94f8"/>
<rect x="1878.17" y="749.00" width="3.26" height="198.00" fill="#b3b7f9"/>
<rect x="1878.17" y="949.00" width="3.26" height="97.20" fill="#d6dbfd"/>
<rect x="1882.69" y="567.80" width="3.26" height="99.20" fill="#8f94f8"/>
<rect x="1882.69" y="669.00" width="3.26" height="178.00" fill="#b3b7f9"/>
<rect x="1882.69" y="849.00" width="3.26" height="197.20" fill="#d6dbfd"/>
<rect x="1887.21" y="567.80" width="3.26" height="99.20" fill="#8f94f8"/>
<rect x="1887.21" y="669.00" width="3.26" height="178.00" fill="#b3b7f9"/>
<rect x="1887.21" y="849.00" width="3.26" height="197.20" fill="#d6dbfd"/>
<rect x="1891.73" y="567.80" width="3.26" height="159.20" fill="#8f94f8"/>
<rect x="1891.73" y="729.00" width="3.26" height="138.00" fill="#b3b7f9"/>
<rect x="1891.73" y="869.00" width="3.26" height="177.20" fill="#d6dbfd"/>
<rect x="1896.25" y="567.80" width="3.26" height="79.20" fill="#8f94f8"/>
<rect x="1896.25" y="649.00" width="3.26" height="218.00" fill="#b3b7f9"/>
<rect x="1896.25" y="869.00" width="3.26" height="177.20" fill="#d6dbfd"/>
<rect x="1900.77" y="567.80" width="3.26" height="159.20" fill="#8f94f8"/>
<rect x="1900.77" y="729.00" width="3.26" height="218.00" fill="#b3b7f9"/>
<rect x="1900.77" y="949.00" width="3.26" height="97.20" fill="#d6dbfd"/>
<rect x="1905.30" y="567.80" width="3.26" height="239.20" fill="#8f94f8"/>
<rect x="1905.30" y="809.00" width="3.26" height="138.00" fill="#b3b7f9"/>
<rect x="1905.30" y="949.00" width="3.26" height="97.20" fill="#d6dbfd"/>
<rect x="1909.82" y="567.80" width="3.26" height="119.20" fill="#8f94f8"/>
<rect x="1909.82" y="689.00" width="3.26" height="198.00" fill="#b3b7f9"/>
<rect x="1909.82" y="889.00" width="3.26" height="157.20" fill="#d6dbfd"/>
<rect x="1914.34" y="567.80" width="3.26" height="99.20" fill="#8f94f8"/>
<rect x="1914.34" y="669.00" width="3.26" height="158.00" fill="#b3b7f9"/>
<rect x="1914.34" y="829.00" width="3.26" height="217.20" fill="#d6dbfd"/>
<rect x="1918.86" y="567.80" width="3.26" height="159.20" fill="#8f94f8"/>
<rect x="1918.86" y="729.00" width="3.26" height="98.00" fill="#b3b7f9"/>
<rect x="1918.86" y="829.00" width="3.26" height="217.20" fill="#d6dbfd"/>
<rect x="1923.38" y="567.80" width="3.26" height="119.20" fill="#8f94f8"/>
<rect x="1923.38" y="689.00" width="3.26" height="278.00" fill="#b3b7f9"/>
<rect x="1923.38" y="969.00" width="3.26" height="77.20" fill="#d6dbfd"/>
<rect x="1927.90" y="567.80" width="3.26" height="99.20" fill="#8f94f8"/>
<rect x="1927.90" y="669.00" width="3.26" height="218.00" fill="#b3b7f9"/>
<rect x="1927.90" y="889.00" width="3.26" height="157.20" fill="#d6dbfd"/>
<rect x="1932.42" y="567.80" width="3.26" height="139.20" fill="#8f94f8"/>
<rect x="1932.42" y="709.00" width="3.26" height="158.00" fill="#b3b7f9"/>
<rect x="1932.42" y="869.00" width="3.26" height="177.20" fill="#d6dbfd"/>
<rect x="1936.94" y="567.80" width="3.26" height="119.20" fill="#8f94f8"/>
<rect x="1936.94" y="689.00" width="3.26" height="158.00" fill="#b3b7f9"/>
<rect x="1936.94" y="849.00" width="3.26" height="197.20" fill="#d6dbfd"/>
<rect x="1941.46" y="567.80" width="3.26" height="159.20" fill="#8f94f8"/>
<rect x="1941.46" y="729.00" width="3.26" height="218.00" fill="#b3b7f9"/>
<rect x="1941.46" y="949.00" width="3.26" height="97.20" fill="#d6dbfd"/>
<rect x="1945.99" y="567.80" width="3.26" height="159.20" fill="#8f94f8"/>
<rect x="1945.99" y="729.00" width="3.26" height="218.00" fill="#b3b7f9"/>
<rect x="1945.99" y="949.00" width="3.26" height="97.20" fill="#d6dbfd"/>
<rect x="1950.51" y="567.80" width="3.26" height="139.20" fill="#8f94f8"/>
<rect x="1950.51" y="709.00" width="3.26" height="158.00" fill="#b3b7f9"/>
<rect x="1950.51" y="869.00" width="3.26" height="177.20" fill="#d6dbfd"/>
<rect x="1955.03" y="567.80" width="3.26" height="59.20" fill="#8f94f8"/>
<rect x="1955.03" y="629.00" width="3.26" height="238.00" fill="#b3b7f9"/>
<rect x="1955.03" y="869.00" width="3.26" height="177.20" fill="#d6dbfd"/>
<rect x="1959.55" y="567.80" width="3.26" height="179.20" fill="#8f94f8"/>
<rect x="1959.55" y="749.00" width="3.26" height="118.00" fill="#b3b7f9"/>
<rect x="1959.55" y="869.00" width="3.26" height="177.20" fill="#d6dbfd"/>
<rect x="1964.07" y="567.80" width="3.26" height="159.20" fill="#8f94f8"/>
<rect x="1964.07" y="729.00" width="3.26" height="218.00" fill="#b3b7f9"/>
<rect x="1964.07" y="949.00" width="3.26" height="97.20" fill="#d6dbfd"/>
<rect x="1968.59" y="567.80" width="3.26" height="99.20" fill="#8f94f8"/>
<rect x="1968.59" y="669.00" width="3.26" height="178.00" fill="#b3b7f9"/>
<rect x="1968.59" y="849.00" width="3.26" height="197.20" fill="#d6dbfd"/>
<rect x="1973.11" y="567.80" width="3.26" height="139.20" fill="#8f94f8"/>
<rect x="1973.11" y="709.00" width="3.26" height="198.00" fill="#b3b7f9"/>
<rect x="1973.11" y="909.00" width="3.26" height="137.20" fill="#d6dbfd"/>
<rect x="1977.63" y="567.80" width="3.26" height="179.20" fill="#8f94f8"/>
<rect x="1977.63" y="749.00" width="3.26" height="178.00" fill="#b3b7f9"/>
<rect x="1977.63" y="929.00" width="3.26" height="117.20" fill="#d6dbfd"/>
<rect x="1982.15" y="567.80" width="3.26" height="119.20" fill="#8f94f8"/>
<rect x="1982.15" y="689.00" width="3.26" height="278.00" fill="#b3b7f9"/>
<rect x="1982.15" y="969.00" width="3.26" height="77.20" fill="#d6dbfd"/>
<rect x="1986.68" y="567.80" width="3.26" height="99.20" fill="#8f94f8"/>
<rect x="1986.68" y="669.00" width="3.26" height="238.00" fill="#b3b7f9"/>
<rect x="1986.68" y="909.00" width="3.26" height="137.20" fill="#d6dbfd"/>
<rect x="1991.20" y="567.80" width="3.26" height="219.20" fill="#8f94f8"/>
<rect x="1991.20" y="789.00" width="3.26" height="158.00" fill="#b3b7f9"/>
<rect x="1991.20" y="949.00" width="3.26" height="97.20" fill="#d6dbfd"/>
<rect x="1995.72" y="567.80" width="3.26" height="99.20" fill="#8f94f8"/>
<rect x="1995.72" y="669.00" width="3.26" height="178.00" fill="#b3b7f9"/>
<rect x="1995.72" y="849.00" width="3.26" height="197.20" fill="#d6dbfd"/>
<rect x="2000.24" y="567.80" width="3.26" height="199.20" fill="#8f94f8"/>
<rect x="2000.24" y="769.00" width="3.26" height="198.00" fill="#b3b7f9"/>
<rect x="2000.24" y="969.00" width="3.26" height="77.20" fill="#d6dbfd"/>
<rect x="2004.76" y="567.80" width="3.26" height="179.20" fill="#8f94f8"/>
<rect x="2004.76" y="749.00" width="3.26" height="158.00" fill="#b3b7f9"/>
<rect x="2004.76" y="909.00" width="3.26" height="137.20" fill="#d6dbfd"/>
<rect x="2009.28" y="567.80" width="3.26" height="119.20" fill="#8f94f8"/>
<rect x="2009.28" y="689.00" width="3.26" height="198.00" fill="#b3b7f9"/>
<rect x="2009.28" y="889.00" width="3.26" height="157.20" fill="#d6dbfd"/>
<rect x="2013.80" y="567.80" width="3.26" height="79.20" fill="#8f94f8"/>
<rect x="2013.80" y="649.00" width="3.26" height="258.00" fill="#b3b7f9"/>
<rect x="2013.80" y="909.00" width="3.26" height="137.20" fill="#d6dbfd"/>
<rect x="2018.32" y="567.80" width="3.26" height="199.20" fill="#8f94f8"/>
<rect x="2018.32" y="769.00" width="3.26" height="178.00" fill="#b3b7f9"/>
<rect x="2018.32" y="949.00" width="3.26" height="97.20" fill="#d6dbfd"/>
<rect x="2022.84" y="567.80" width="3.26" height="99.20" fill="#8f94f8"/>
<rect x="2022.84" y="669.00" width="3.26" height="218.00" fill="#b3b7f9"/>
<rect x="2022.84" y="889.00" width="3.26" height="157.20" fill="#d6dbfd"/>
<rect x="2027.37" y="567.80" width="3.26" height="179.20" fill="#8f94f8"/>
<rect x="2027.37" y="749.00" width="3.26" height="178.00" fill="#b3b7f9"/>
<rect x="2027.37" y="929.00" width="3.26" height="117.20" fill="#d6dbfd"/>
<rect x="2031.89" y="567.80" width="3.26" height="79.20" fill="#8f94f8"/>
<rect x="2031.89" y="649.00" width="3.26" height="178.00" fill="#b3b7f9"/>
<rect x="2031.89" y="829.00" width="3.26" height="217.20" fill="#d6dbfd"/>
<rect x="2036.41" y="567.80" width="3.26" height="139.20" fill="#8f94f8"/>
<rect x="2036.41" y="709.00" width="3.26" height="218.00" fill="#b3b7f9"/>
<rect x="2036.41" y="929.00" width="3.26" height="117.20" fill="#d6dbfd"/>
<rect x="2040.93" y="567.80" width="3.26" height="79.20" fill="#8f94f8"/>
<rect x="2040.93" y="649.00" width="3.26" height="278.00" fill="#b3b7f9"/>
<rect x="2040.93" y="929.00" width="3.26" height="117.20" fill="#d6dbfd"/>
<rect x="2045.45" y="567.80" width="3.26" height="139.20" fill="#8f94f8"/>
<rect x="2045.45" y="709.00" width="3.26" height="218.00" fill="#b3b7f9"/>
<rect x="2045.45" y="929.00" width="3.26" height="117.20" fill="#d6dbfd"/>
<rect x="2049.97" y="567.80" width="3.26" height="139.20" fill="#8f94f8"/>
<rect x="2049.97" y="709.00" width="3.26" height="258.00" fill="#b3b7f9"/>
<rect x="2049.97" y="969.00" width="3.26" height="77.20" fill="#d6dbfd"/>
<rect x="2054.49" y="567.00" width="3.26" height="480.00" fill="#b3b7f9"/>
<rect x="2059.01" y="567.80" width="3.26" height="39.20" fill="#8f94f8"/>
<rect x="2059.01" y="609.00" width="3.26" height="398.00" fill="#b3b7f9"/>
<rect x="2059.01" y="1009.00" width="3.26" height="37.20" fill="#d6dbfd"/>
<rect x="2063.53" y="567.80" width="3.26" height="79.20" fill="#8f94f8"/>
<rect x="2063.53" y="649.00" width="3.26" height="178.00" fill="#b3b7f9"/>
<rect x="2063.53" y="829.00" width="3.26" height="217.20" fill="#d6dbfd"/>
<rect x="2068.06" y="567.80" width="3.26" height="99.20" fill="#8f94f8"/>
<rect x="2068.06" y="669.00" width="3.26" height="218.00" fill="#b3b7f9"/>
<rect x="2068.06" y="889.00" width="3.26" height="157.20" fill="#d6dbfd"/>
<rect x="2072.58" y="567.80" width="3.26" height="199.20" fill="#8f94f8"/>
<rect x="2072.58" y="769.00" width="3.26" height="118.00" fill="#b3b7f9"/>
<rect x="2072.58" y="889.00" width="3.26" height="157.20" fill="#d6dbfd"/>
<rect x="2077.10" y="567.80" width="3.26" height="119.20" fill="#8f94f8"/>
<rect x="2077.10" y="689.00" width="3.26" height="198.00" fill="#b3b7f9"/>
<rect x="2077.10" y="889.00" width="3.26" height="157.20" fill="#d6dbfd"/>
<rect x="2081.62" y="567.80" width="3.26" height="79.20" fill="#8f94f8"/>
<rect x="2081.62" y="649.00" width="3.26" height="238.00" fill="#b3b7f9"/>
<rect x="2081.62" y="889.00" width="3.26" height="157.20" fill="#d6dbfd"/>
<rect x="2086.14" y="567.80" width="3.26" height="219.20" fill="#8f94f8"/>
<rect x="2086.14" y="789.00" width="3.26" height="178.00" fill="#b3b7f9"/>
<rect x="2086.14" y="969.00" width="3.26" height="77.20" fill="#d6dbfd"/>
<rect x="2090.66" y="567.80" width="3.26" height="99.20" fill="#8f94f8"/>
<rect x="2090.66" y="669.00" width="3.26" height="198.00" fill="#b3b7f9"/>
<rect x="2090.66" y="869.00" width="3.26" height="177.20" fill="#d6dbfd"/>
<rect x="2095.18" y="567.80" width="3.26" height="119.20" fill="#8f94f8"/>
<rect x="2095.18" y="689.00" width="3.26" height="178.00" fill="#b3b7f9"/>
<rect x="2095.18" y="869.00" width="3.26" height="177.20" fill="#d6dbfd"/>
<rect x="2099.70" y="567.80" width="3.26" height="179.20" fill="#8f94f8"/>
<rect x="2099.70" y="749.00" width="3.26" height="178.00" fill="#b3b7f9"/>
<rect x="2099.70" y="929.00" width="3.26" height="117.20" fill="#d6dbfd"/>
<rect x="2104.22" y="567.80" width="3.26" height="139.20" fill="#8f94f8"/>
<rect x="2104.22" y="709.00" width="3.26" height="198.00" fill="#b3b7f9"/>
<rect x="2104.22" y="909.00" width="3.26" height="137.20" fill="#d6dbfd"/>
<rect x="2108.75" y="567.80" width="3.26" height="159.20" fill="#8f94f8"/>
<rect x="2108.75" y="729.00" width="3.26" height="178.00" fill="#b3b7f9"/>
<rect x="2108.75" y="909.00" width="3.26" height="137.20" fill="#d6dbfd"/>
<rect x="2113.27" y="567.80" width="3.26" height="119.20" fill="#8f94f8"/>
<rect x="2113.27" y="689.00" width="3.26" height="198.00" fill="#b3b7f9"/>
<rect x="2113.27" y="889.00" width="3.26" height="157.20" fill="#d6dbfd"/>
<rect x="2117.79" y="567.80" width="3.26" height="159.20" fill="#8f94f8"/>
<rect x="2117.79" y="729.00" width="3.26" height="198.00" fill="#b3b7f9"/>
<rect x="2117.79" y="929.00" width="3.26" height="117.20" fill="#d6dbfd"/>
<rect x="2122.31" y="567.80" width="3.26" height="179.20" fill="#8f94f8"/>
<rect x="2122.31" y="749.00" width="3.26" height="158.00" fill="#b3b7f9"/>
<rect x="2122.31" y="909.00" width="3.26" height="137.20" fill="#d6dbfd"/>
<rect x="2126.83" y="567.80" width="3.26" height="219.20" fill="#8f94f8"/>
<rect x="2126.83" y="789.00" width="3.26" height="138.00" fill="#b3b7f9"/>
<rect x="2126.83" y="929.00" width="3.26" height="117.20" fill="#d6dbfd"/>
<rect x="2131.35" y="567.80" width="3.26" height="478.40" fill="#8f94f8"/>
<rect x="2131.35" y="1046.20" width="3.26" height="3.6" fill="#b6bbf9"/>
<rect x="2135.87" y="567.80" width="3.26" height="478.40" fill="#8f94f8"/>
<rect x="2135.87" y="1046.20" width="3.26" height="3.6" fill="#b6bbf9"/>
<rect x="2140.39" y="567.80" width="3.26" height="478.40" fill="#8f94f8"/>
<rect x="2140.39" y="1046.20" width="3.26" height="3.6" fill="#b6bbf9"/>
<rect x="2144.91" y="567.80" width="3.26" height="478.40" fill="#8f94f8"/>
<rect x="2144.91" y="1046.20" width="3.26" height="3.6" fill="#b6bbf9"/>
<rect x="2149.44" y="567.80" width="3.26" height="478.40" fill="#8f94f8"/>
<rect x="2149.44" y="1046.20" width="3.26" height="3.6" fill="#b6bbf9"/>
<rect x="2153.96" y="567.80" width="3.26" height="478.40" fill="#8f94f8"/>
<rect x="2153.96" y="1046.20" width="3.26" height="3.6" fill="#b6bbf9"/>
<rect x="2158.48" y="567.80" width="3.26" height="478.40" fill="#8f94f8"/>
<rect x="2158.48" y="1046.20" width="3.26" height="3.6" fill="#b6bbf9"/>
<rect x="2163.00" y="567.80" width="3.26" height="478.40" fill="#8f94f8"/>
<rect x="2163.00" y="1046.20" width="3.26" height="3.6" fill="#b6bbf9"/>
<rect x="2167.52" y="567.80" width="3.26" height="478.40" fill="#8f94f8"/>
<rect x="2167.52" y="1046.20" width="3.26" height="3.6" fill="#b6bbf9"/>
<rect x="2172.04" y="567.80" width="3.26" height="478.40" fill="#8f94f8"/>
<rect x="2172.04" y="1046.20" width="3.26" height="3.6" fill="#b6bbf9"/>
<rect x="2176.56" y="567.80" width="3.26" height="478.40" fill="#8f94f8"/>
<rect x="2176.56" y="1046.20" width="3.26" height="3.6" fill="#b6bbf9"/>
<rect x="2181.08" y="567.80" width="3.26" height="478.40" fill="#8f94f8"/>
<rect x="2181.08" y="1046.20" width="3.26" height="3.6" fill="#b6bbf9"/>
<rect x="2185.60" y="567.80" width="3.26" height="478.40" fill="#8f94f8"/>
<rect x="2185.60" y="1046.20" width="3.26" height="3.6" fill="#b6bbf9"/>
<rect x="2190.13" y="567.80" width="3.26" height="478.40" fill="#8f94f8"/>
<rect x="2190.13" y="1046.20" width="3.26" height="3.6" fill="#b6bbf9"/>
<rect x="2194.65" y="567.80" width="3.26" height="478.40" fill="#8f94f8"/>
<rect x="2194.65" y="1046.20" width="3.26" height="3.6" fill="#b6bbf9"/>
<rect x="2199.17" y="567.80" width="3.26" height="478.40" fill="#8f94f8"/>
<rect x="2199.17" y="1046.20" width="3.26" height="3.6" fill="#b6bbf9"/>
<rect x="2203.69" y="567.80" width="3.26" height="478.40" fill="#8f94f8"/>
<rect x="2203.69" y="1046.20" width="3.26" height="3.6" fill="#b6bbf9"/>
<rect x="2208.21" y="567.80" width="3.26" height="478.40" fill="#8f94f8"/>
<rect x="2208.21" y="1046.20" width="3.26" height="3.6" fill="#b6bbf9"/>
<rect x="2212.73" y="567.80" width="3.26" height="478.40" fill="#8f94f8"/>
<rect x="2212.73" y="1046.20" width="3.26" height="3.6" fill="#b6bbf9"/>
<rect x="2217.25" y="567.80" width="3.26" height="478.40" fill="#8f94f8"/>
<rect x="2217.25" y="1046.20" width="3.26" height="3.6" fill="#b6bbf9"/>
<rect x="2221.77" y="567.80" width="3.26" height="478.40" fill="#8f94f8"/>
<rect x="2221.77" y="1046.20" width="3.26" height="3.6" fill="#b6bbf9"/>
<rect x="2226.29" y="567.80" width="3.26" height="478.40" fill="#8f94f8"/>
<rect x="2226.29" y="1046.20" width="3.26" height="3.6" fill="#b6bbf9"/>
<rect x="2230.81" y="567.80" width="3.26" height="478.40" fill="#8f94f8"/>
<rect x="2230.81" y="1046.20" width="3.26" height="3.6" fill="#b6bbf9"/>
<rect x="2235.34" y="567.80" width="3.26" height="478.40" fill="#8f94f8"/>
<rect x="2235.34" y="1046.20" width="3.26" height="3.6" fill="#b6bbf9"/>
<rect x="2239.86" y="567.80" width="3.26" height="478.40" fill="#8f94f8"/>
<rect x="2239.86" y="1046.20" width="3.26" height="3.6" fill="#b6bbf9"/>
<rect x="2244.38" y="567.80" width="3.26" height="478.40" fill="#8f94f8"/>
<rect x="2244.38" y="1046.20" width="3.26" height="3.6" fill="#b6bbf9"/>
<rect x="2248.90" y="567.80" width="3.26" height="478.40" fill="#8f94f8"/>
<rect x="2248.90" y="1046.20" width="3.26" height="3.6" fill="#b6bbf9"/>
<rect x="2253.42" y="567.80" width="3.26" height="478.40" fill="#8f94f8"/>
<rect x="2253.42" y="1046.20" width="3.26" height="3.6" fill="#b6bbf9"/>
<rect x="2257.94" y="567.80" width="3.26" height="478.40" fill="#8f94f8"/>
<rect x="2257.94" y="1046.20" width="3.26" height="3.6" fill="#b6bbf9"/>
<rect x="2262.46" y="567.80" width="3.26" height="478.40" fill="#8f94f8"/>
<rect x="2262.46" y="1046.20" width="3.26" height="3.6" fill="#b6bbf9"/>
<rect x="2266.98" y="567.80" width="3.26" height="478.40" fill="#8f94f8"/>
<rect x="2266.98" y="1046.20" width="3.26" height="3.6" fill="#b6bbf9"/>
<rect x="2271.50" y="567.80" width="3.26" height="478.40" fill="#8f94f8"/>
<rect x="2271.50" y="1046.20" width="3.26" height="3.6" fill="#b6bbf9"/>
<rect x="2276.03" y="567.80" width="3.26" height="478.40" fill="#8f94f8"/>
<rect x="2276.03" y="1046.20" width="3.26" height="3.6" fill="#b6bbf9"/>
<rect x="2280.55" y="567.80" width="3.26" height="478.40" fill="#8f94f8"/>
<rect x="2280.55" y="1046.20" width="3.26" height="3.6" fill="#b6bbf9"/>
<rect x="2285.07" y="567.80" width="3.26" height="478.40" fill="#8f94f8"/>
<rect x="2285.07" y="1046.20" width="3.26" height="3.6" fill="#b6bbf9"/>
<rect x="2289.59" y="567.80" width="3.26" height="478.40" fill="#8f94f8"/>
<rect x="2289.59" y="1046.20" width="3.26" height="3.6" fill="#b6bbf9"/>
<rect x="2294.11" y="567.80" width="3.26" height="478.40" fill="#8f94f8"/>
<rect x="2294.11" y="1046.20" width="3.26" height="3.6" fill="#b6bbf9"/>
<rect x="2298.63" y="567.80" width="3.26" height="478.40" fill="#8f94f8"/>
<rect x="2298.63" y="1046.20" width="3.26" height="3.6" fill="#b6bbf9"/>
<rect x="2303.15" y="567.80" width="3.26" height="478.40" fill="#8f94f8"/>
<rect x="2303.15" y="1046.20" width="3.26" height="3.6" fill="#b6bbf9"/>
<rect x="2307.67" y="567.80" width="3.26" height="478.40" fill="#8f94f8"/>
<rect x="2307.67" y="1046.20" width="3.26" height="3.6" fill="#b6bbf9"/>
<rect x="2312.19" y="567.80" width="3.26" height="478.40" fill="#8f94f8"/>
<rect x="2312.19" y="1046.20" width="3.26" height="3.6" fill="#b6bbf9"/>
<rect x="2316.72" y="567.80" width="3.26" height="478.40" fill="#8f94f8"/>
<rect x="2316.72" y="1046.20" width="3.26" height="3.6" fill="#b6bbf9"/>
<rect x="2321.24" y="567.80" width="3.26" height="478.40" fill="#8f94f8"/>
<rect x="2321.24" y="1046.20" width="3.26" height="3.6" fill="#b6bbf9"/>
<rect x="2325.76" y="567.80" width="3.26" height="478.40" fill="#8f94f8"/>
<rect x="2325.76" y="1046.20" width="3.26" height="3.6" fill="#b6bbf9"/>
<rect x="2330.28" y="567.80" width="3.26" height="478.40" fill="#8f94f8"/>
<rect x="2330.28" y="1046.20" width="3.26" height="3.6" fill="#b6bbf9"/>
<rect x="2334.80" y="567.80" width="3.26" height="478.40" fill="#8f94f8"/>
<rect x="2334.80" y="1046.20" width="3.26" height="3.6" fill="#b6bbf9"/>
<rect x="2339.32" y="567.80" width="3.26" height="478.40" fill="#8f94f8"/>
<rect x="2339.32" y="1046.20" width="3.26" height="3.6" fill="#b6bbf9"/>
<rect x="2343.84" y="567.80" width="3.26" height="478.40" fill="#8f94f8"/>
<rect x="2343.84" y="1046.20" width="3.26" height="3.6" fill="#b6bbf9"/>
<rect x="2348.36" y="567.80" width="3.26" height="478.40" fill="#8f94f8"/>
<rect x="2348.36" y="1046.20" width="3.26" height="3.6" fill="#b6bbf9"/>
<rect x="2352.88" y="567.80" width="3.26" height="478.40" fill="#8f94f8"/>
<rect x="2352.88" y="1046.20" width="3.26" height="3.6" fill="#b6bbf9"/>
<rect x="2357.41" y="567.80" width="3.26" height="478.40" fill="#8f94f8"/>
<rect x="2357.41" y="1046.20" width="3.26" height="3.6" fill="#b6bbf9"/>
<rect x="2361.93" y="567.80" width="3.26" height="478.40" fill="#8f94f8"/>
<rect x="2361.93" y="1046.20" width="3.26" height="3.6" fill="#b6bbf9"/>
<rect x="2366.45" y="567.80" width="3.26" height="478.40" fill="#8f94f8"/>
<rect x="2366.45" y="1046.20" width="3.26" height="3.6" fill="#b6bbf9"/>
<rect x="2370.97" y="567.80" width="3.26" height="478.40" fill="#8f94f8"/>
<rect x="2370.97" y="1046.20" width="3.26" height="3.6" fill="#b6bbf9"/>
<rect x="2375.49" y="567.80" width="3.26" height="478.40" fill="#8f94f8"/>
<rect x="2375.49" y="1046.20" width="3.26" height="3.6" fill="#b6bbf9"/>
<rect x="2380.01" y="567.80" width="3.26" height="478.40" fill="#8f94f8"/>
<rect x="2380.01" y="1046.20" width="3.26" height="3.6" fill="#b6bbf9"/>
<rect x="2384.53" y="567.80" width="3.26" height="478.40" fill="#8f94f8"/>
<rect x="2384.53" y="1046.20" width="3.26" height="3.6" fill="#b6bbf9"/>
<rect x="2389.05" y="567.80" width="3.26" height="478.40" fill="#8f94f8"/>
<rect x="2389.05" y="1046.20" width="3.26" height="3.6" fill="#b6bbf9"/>
<rect x="2393.57" y="567.80" width="3.26" height="478.40" fill="#8f94f8"/>
<rect x="2393.57" y="1046.20" width="3.26" height="3.6" fill="#b6bbf9"/>
<rect x="2398.10" y="567.80" width="3.26" height="478.40" fill="#8f94f8"/>
<rect x="2398.10" y="1046.20" width="3.26" height="3.6" fill="#b6bbf9"/>
<rect x="2402.62" y="567.80" width="3.26" height="478.40" fill="#8f94f8"/>
<rect x="2402.62" y="1046.20" width="3.26" height="3.6" fill="#b6bbf9"/>
<rect x="2407.14" y="567.80" width="3.26" height="478.40" fill="#8f94f8"/>
<rect x="2407.14" y="1046.20" width="3.26" height="3.6" fill="#b6bbf9"/>
<rect x="2411.66" y="567.80" width="3.26" height="478.40" fill="#8f94f8"/>
<rect x="2411.66" y="1046.20" width="3.26" height="3.6" fill="#b6bbf9"/>
<rect x="2416.18" y="567.80" width="3.26" height="478.40" fill="#8f94f8"/>
<rect x="2416.18" y="1046.20" width="3.26" height="3.6" fill="#b6bbf9"/>
<rect x="2420.70" y="567.80" width="3.26" height="478.40" fill="#8f94f8"/>
<rect x="2420.70" y="1046.20" width="3.26" height="3.6" fill="#b6bbf9"/>
<rect x="2425.22" y="567.80" width="3.26" height="478.40" fill="#8f94f8"/>
<rect x="2425.22" y="1046.20" width="3.26" height="3.6" fill="#b6bbf9"/>
<rect x="2429.74" y="567.80" width="3.26" height="478.40" fill="#8f94f8"/>
<rect x="2429.74" y="1046.20" width="3.26" height="3.6" fill="#b6bbf9"/>
<rect x="2434.26" y="567.80" width="3.26" height="478.40" fill="#8f94f8"/>
<rect x="2434.26" y="1046.20" width="3.26" height="3.6" fill="#b6bbf9"/>
<rect x="2438.79" y="567.80" width="3.26" height="478.40" fill="#8f94f8"/>
<rect x="2438.79" y="1046.20" width="3.26" height="3.6" fill="#b6bbf9"/>
<rect x="2443.31" y="567.80" width="3.26" height="478.40" fill="#8f94f8"/>
<rect x="2443.31" y="1046.20" width="3.26" height="3.6" fill="#b6bbf9"/>
<rect x="2447.83" y="567.80" width="3.26" height="478.40" fill="#8f94f8"/>
<rect x="2447.83" y="1046.20" width="3.26" height="3.6" fill="#b6bbf9"/>
<rect x="2452.35" y="567.80" width="3.26" height="478.40" fill="#8f94f8"/>
<rect x="2452.35" y="1046.20" width="3.26" height="3.6" fill="#b6bbf9"/>
<rect x="2456.87" y="567.80" width="3.26" height="478.40" fill="#8f94f8"/>
<rect x="2456.87" y="1046.20" width="3.26" height="3.6" fill="#b6bbf9"/>
<rect x="2461.39" y="567.80" width="3.26" height="478.40" fill="#8f94f8"/>
<rect x="2461.39" y="1046.20" width="3.26" height="3.6" fill="#b6bbf9"/>
<rect x="2465.91" y="567.80" width="3.26" height="478.40" fill="#8f94f8"/>
<rect x="2465.91" y="1046.20" width="3.26" height="3.6" fill="#b6bbf9"/>
</svg>

<svg class="b" style="left:0;top:0" width="2550" height="1347" viewBox="0 0 2550 1347" fill="none" stroke="#4a4a5a" stroke-width="2.3" stroke-linecap="butt" stroke-linejoin="miter">
<path d="M33.13,30.30 L36.41,27.02 L41.43,31.46 L45.79,27.02 L50.50,31.46 L55.44,27.02 L58.61,30.30 L53.98,35.13 L58.61,39.76 L63.44,35.13 L66.91,38.41 L62.08,43.24 L66.91,47.68 L62.08,52.50 L66.91,57.14 L63.44,60.42 L58.61,55.98 L53.98,60.61 L58.61,65.24 L55.44,68.33 L50.50,63.89 L45.79,68.33 L41.43,63.89 L36.41,68.33 L33.13,65.24 L37.76,60.61 L33.13,55.98 L28.30,60.42 L25.02,57.14 L29.65,52.31 L25.02,47.68 L29.65,43.24 L25.02,38.41 L28.30,35.13 L33.51,39.76 L37.76,35.13 Z" fill="#5558f6" stroke="none"/>
<path d="M31.97,47.68 L45.68,33.97 L48.96,37.44 L35.44,50.96 Z" fill="#fff" stroke="none"/><path d="M37.18,53.27 L48.57,41.69 L52.05,44.97 L40.66,56.56 Z" fill="#fff" stroke="none"/><path d="M42.59,58.29 L50.50,50.19 L53.98,53.47 L45.68,61.77 Z" fill="#fff" stroke="none"/>
<path d="M26.4,146.2 L43.6,130.8 L60.9,146.2 L57,146.2 L57,164.3 L48.6,164.3 L48.6,152.5 L38.9,152.5 L38.9,164.3 L30,164.3 L30,146.2 Z"/>
<circle cx="86.6" cy="200.8" r="25.6" fill="#fff" stroke="#ededed" stroke-width="1.5"/>
<path d="M80.6,188.6 L92.2,201 L80.6,213.2" stroke-width="2.8" stroke-linecap="round"/>
<g stroke="#5558f6" stroke-width="2.4">
<path d="M27.8,228.8 L27.8,258.8 Q27.8,261.3 30.3,261.3 L60.9,261.3"/>
<path d="M33.9,257.5 V253 M37.5,257.5 V245.8 M43.6,257.5 V240.8 M47.5,257.5 V248 M53.4,257.5 V243 M57.5,257.5 V236.4"/>
</g>
<circle cx="39.6" cy="340.4" r="13.9"/>
<path d="M49.8,350.8 L61.9,362.9"/>
<path d="M26.8,345.1 L34.6,345.1 L39.4,333.4 L44.1,345.1 L52.4,345.1" stroke-width="1.5"/>
<path d="M24,441.4 L30.1,441.4 L36.3,457 L46.3,428 L63,428"/>
<path d="M49.6,441.4 L60.2,452.5 M60.2,441.4 L49.6,452.5"/>
<path d="M26.2,546.4 L35.7,537.3 L42.4,544.2 L61.3,527.2"/>
<path d="M48.3,526.7 L61.3,526.7 L61.3,537.8"/>
<path d="M24.2,557.3 L63.6,557.3"/>
<path d="M39.6,629.6999999999999 Q39.6,643.3 52.8,643.3 Q39.6,643.3 39.6,656.9 Q39.6,643.3 26.400000000000002,643.3 Q39.6,643.3 39.6,629.6999999999999 Z" stroke-width="2"/>
<path d="M53.6,622.3 Q53.6,629.3 60.9,629.3 Q53.6,629.3 53.6,636.3 Q53.6,629.3 46.300000000000004,629.3 Q53.6,629.3 53.6,622.3 Z" stroke-width="2"/>
<path d="M23.8,723.1 H63.7 M23.8,738.6 H63.7 M23.8,754 H63.7"/>
<path d="M55.34,1101.78 L60.09,1101.75 L60.09,1109.25 L55.34,1109.22 L54.44,1111.38 L57.82,1114.71 L52.51,1120.02 L49.18,1116.64 L47.02,1117.54 L47.05,1122.29 L39.55,1122.29 L39.58,1117.54 L37.42,1116.64 L34.09,1120.02 L28.78,1114.71 L32.16,1111.38 L31.26,1109.22 L26.51,1109.25 L26.51,1101.75 L31.26,1101.78 L32.16,1099.62 L28.78,1096.29 L34.09,1090.98 L37.42,1094.36 L39.58,1093.46 L39.55,1088.71 L47.05,1088.71 L47.02,1093.46 L49.18,1094.36 L52.51,1090.98 L57.82,1096.29 L54.44,1099.62 Z" stroke-width="2"/>
<circle cx="43.3" cy="1105.5" r="6.8" stroke-width="2"/>
<path d="M24,1191.4 H49.7 M54.5,1187.3 V1195.8 M54.5,1191.4 H63.2 M24,1204.7 H34.8 M34.8,1200.5 V1209 M39.1,1204.7 H63.2 M24,1217.9 H49.7 M54.5,1213.7 V1222.2 M54.5,1217.9 H63.2"/>
<circle cx="43.6" cy="1303.6" r="17.4" stroke-width="1.9"/>
<path d="M31.5,1318.5 Q34,1314.2 38.2,1312.8 Q39.6,1312.2 39.4,1309.6 Q36.4,1306.2 36.4,1300.2 Q36.6,1292.4 43.6,1292.2 Q50.6,1292.4 50.8,1300.2 Q50.8,1306.2 47.8,1309.6 Q47.6,1312.2 49,1312.8 Q53.2,1314.2 55.7,1318.5" stroke-width="1.9"/>
<path d="M588,187 L596,195.3 L604,187" stroke-width="2"/>
<path d="M1098,187 L1106,195.3 L1114,187" stroke-width="2"/>
<path d="M1589.2,180 Q1589.2,177.9 1591.7,177.9 L1615.3,177.9 Q1617.8,177.9 1617.8,180.4 L1617.8,204 Q1617.8,206.5 1615.3,206.5 L1591.7,206.5 Q1589.2,206.5 1589.2,204 Z" stroke-width="2.1"/>
<path d="M1589.2,185.6 H1617.8 M1596.9,174.3 V181.3 M1610.1,174.3 V181.3" stroke-width="2.1"/>
<circle cx="170.8" cy="395.9" r="10" stroke-width="1.7"/>
<path d="M178,402.6 L187.1,412" stroke-width="1.7"/>
<path d="M531.8,399.6 Q540,388.7 550.5,388.7 Q561,388.7 569.2,399.6 Q561,410.8 550.5,410.8 Q540,410.8 531.8,399.6 Z" stroke-width="1.8"/>
<circle cx="550.6" cy="399.8" r="6.1" stroke-width="1.8"/>
<path d="M534.7,417.9 L568.1,381.4" stroke-width="1.8"/>
<path d="M134,491.1 L144.3,480.70000000000005 L154.6,491.1" stroke-width="1.9"/><path d="M134,544.0 L144.3,533.6 L154.6,544.0" stroke-width="1.9"/><path d="M134,597.2 L144.3,586.8000000000001 L154.6,597.2" stroke-width="1.9"/><path d="M134,651.1 L144.3,640.7 L154.6,651.1" stroke-width="1.9"/><path d="M134,704.0 L144.3,693.6 L154.6,704.0" stroke-width="1.9"/>
<path d="M134,748 L144.3,759.3 L154.6,748" stroke-width="1.9"/>
<path d="M223.1,807 H226.5 V819.6 M231.1,807 H236.9 V813.1 H231.9 V819.2 H237.6 M240.6,807 H246.6 V819.2 H240.6 M243.2,813.1 H246.6" stroke-width="1.6" stroke="#4a4a5a"/><path d="M223.1,874.7 H226.5 V887.3000000000001 M231.1,874.7 H236.9 V880.8000000000001 H231.9 V886.9000000000001 H237.6 M240.6,874.7 H246.6 V886.9000000000001 H240.6 M243.2,880.8000000000001 H246.6" stroke-width="1.6" stroke="#5558f6"/>
<path d="M1620.5,470.5 L1629.2,480 L1637.9,470.5" stroke-width="2"/>
<path d="M2239.2,470.5 L2247.9,480 L2256.6,470.5" stroke-width="2"/>
<g stroke="#5558f6" stroke-width="2.6">
<path d="M2325,458.2 L2325,489.5 Q2325,492 2327.5,492 L2359.7,492" stroke-linecap="round"/>
<path d="M2331.5,488.8 V484.1 M2335.5,488.8 V476.2 M2341.9,488.8 V471.2 M2346,488.8 V478.8 M2352.5,488.8 V473.5 M2356.5,488.8 V465.6"/>
</g>
<path d="M2409.9,458.2 L2409.9,489.5 Q2409.9,492 2412.4,492 L2444.7,492" stroke-width="2.6" stroke-linecap="round"/>
<path d="M2410.9,491.5 L2420,474.4 L2431.5,483.8 L2440,468.8" stroke-width="2.6" stroke-linejoin="round"/>
</svg>
</body></html>
